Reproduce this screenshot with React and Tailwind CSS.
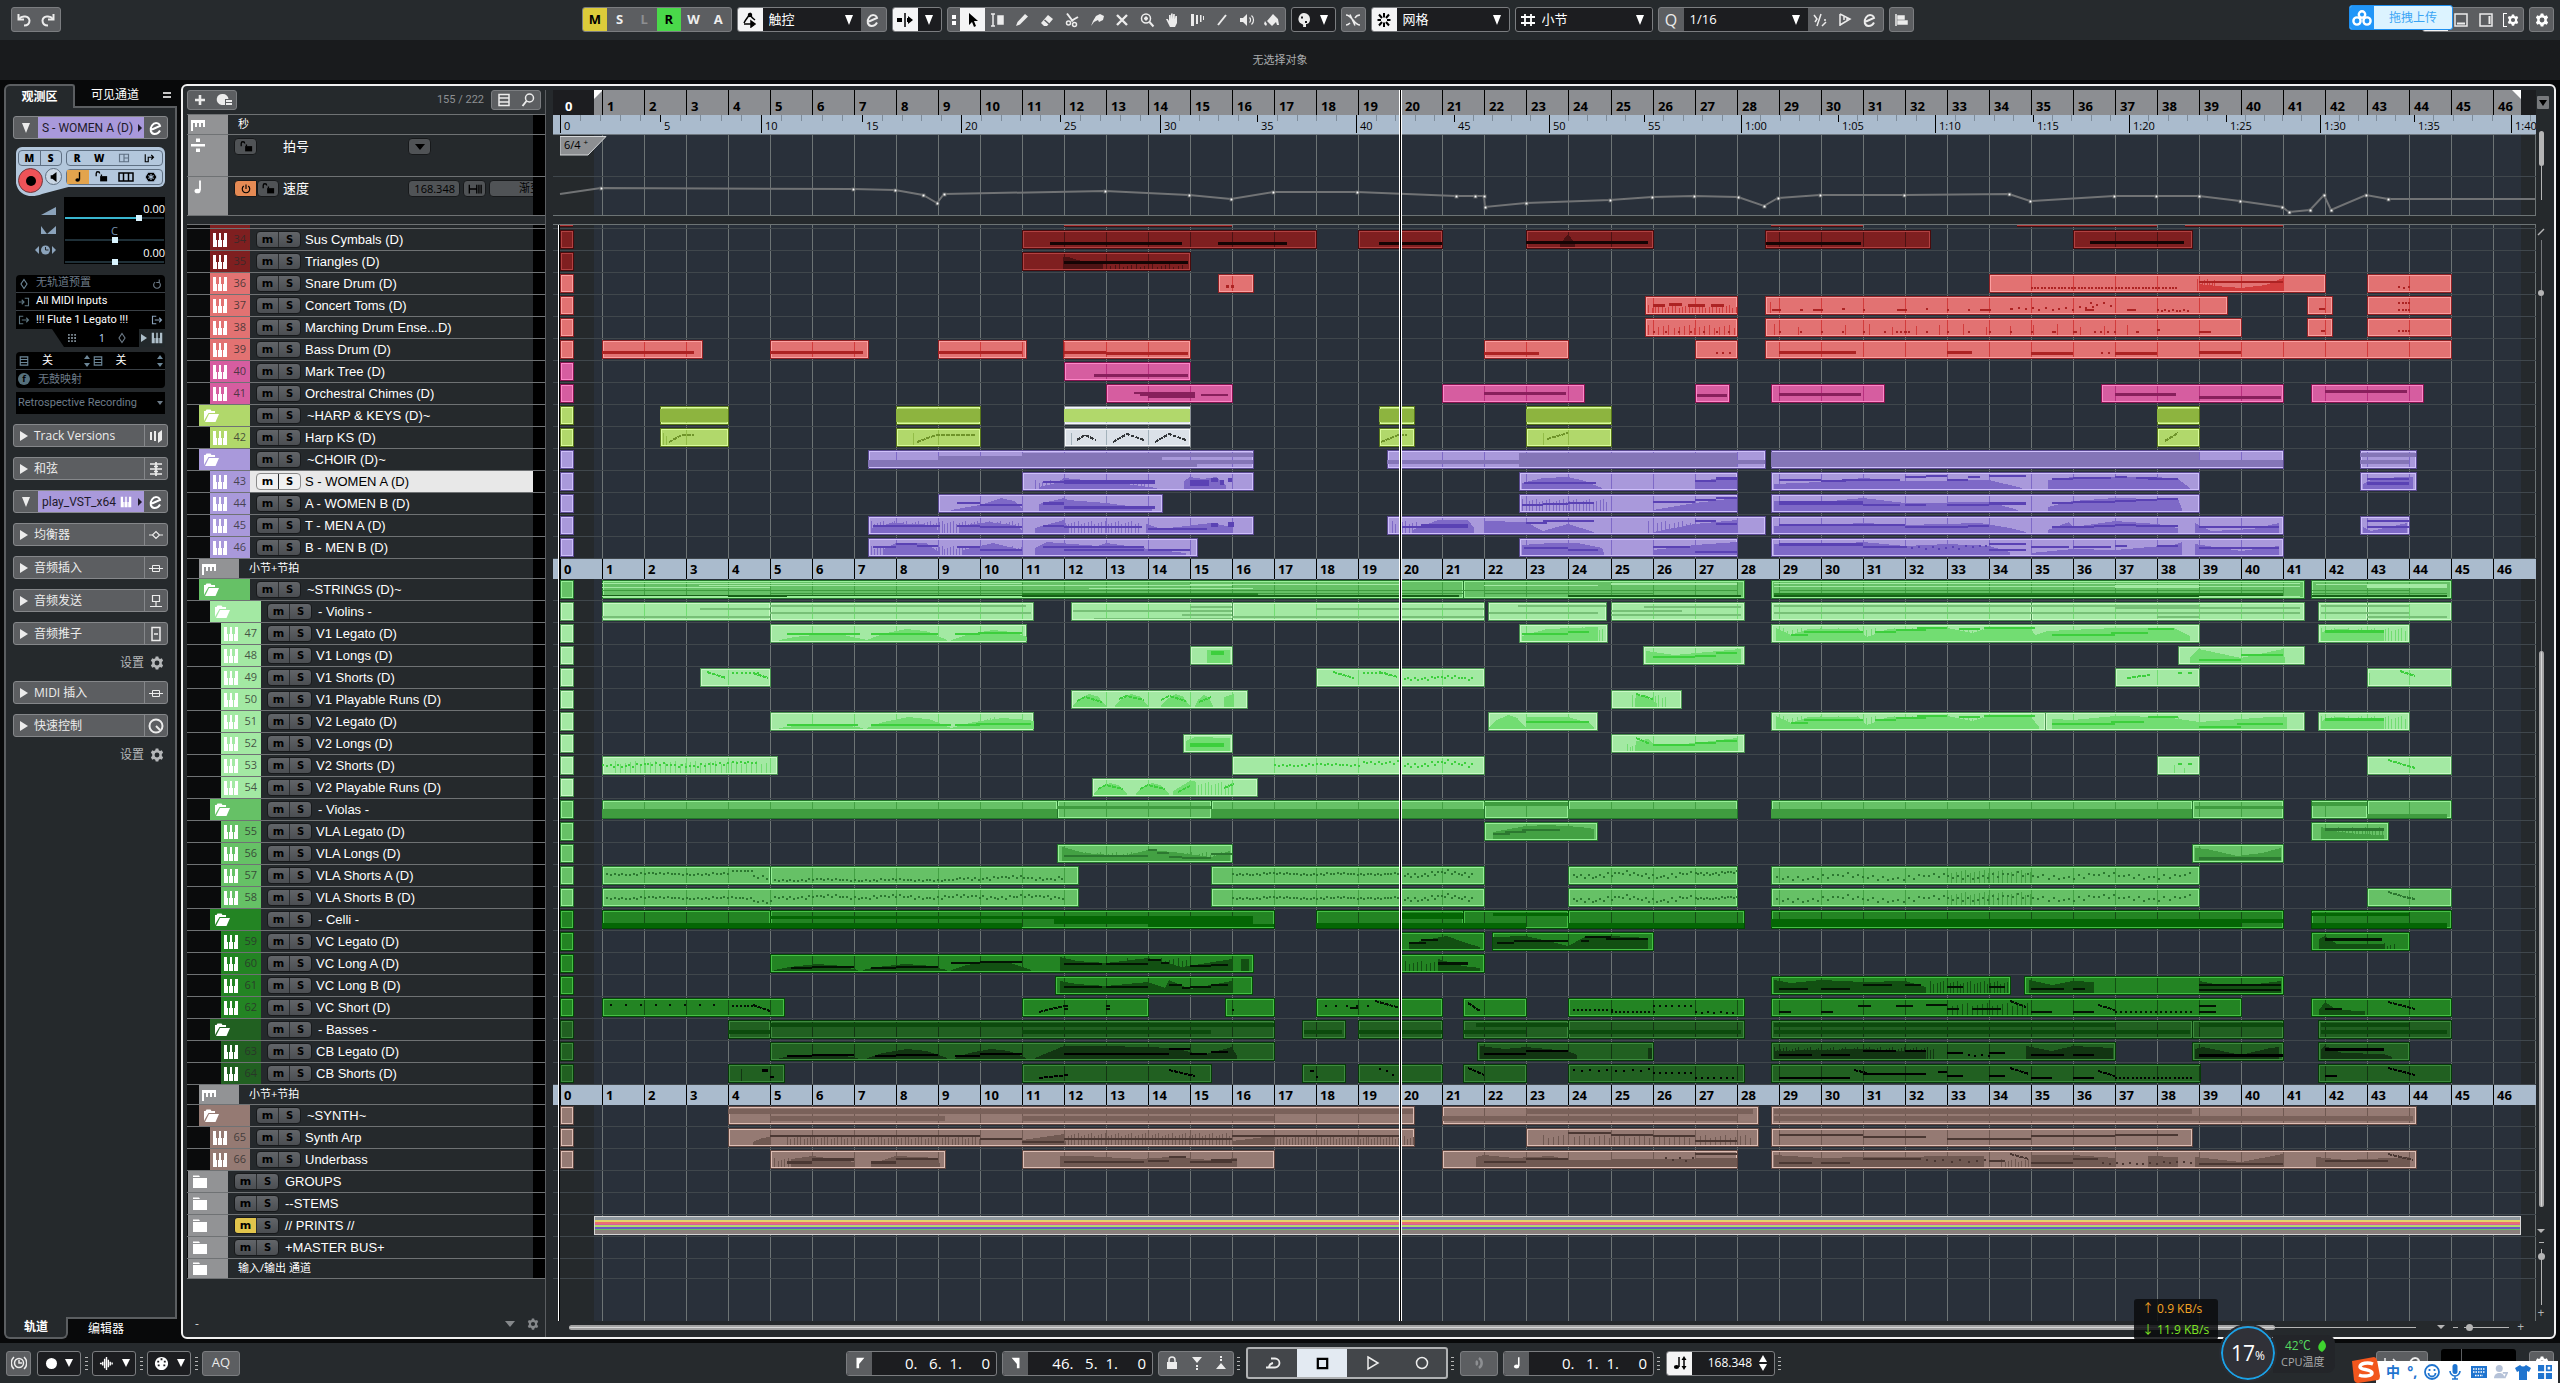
import { Fragment } from "react";

// Horizontal zoom of the project window, in pixels per bar
const BAR_WIDTH = 42.02;
const ORIGIN = 7;
const LEFT_LOCATOR = 0.81;
const RIGHT_LOCATOR = 46.67;
const BARS = Array.from({ length: 47 }, (_, i) => i);

const barX = (bar) => ORIGIN + Math.round(bar * BAR_WIDTH);

const SECONDS = [
  [0, "0"], [100, "5"], [201, "10"], [302, "15"], [401, "20"], [500, "25"],
  [600, "30"], [697, "35"], [796, "40"], [894, "45"], [989, "50"], [1084, "55"],
  [1181, "1:00"], [1278, "1:05"], [1375, "1:10"], [1473, "1:15"], [1569, "1:20"],
  [1666, "1:25"], [1760, "1:30"], [1854, "1:35"], [1951, "1:40"],
];

const TEMPO_POINTS = [
  [0, 17], [41, 11], [293, 12], [335, 13], [363, 18], [377, 26], [384, 17],
  [545, 14], [629, 18], [671, 22], [713, 15], [797, 15], [896, 19], [915, 19],
  [924, 19], [925, 30], [966, 26], [1050, 23], [1092, 20], [1134, 19],
  [1178, 20], [1204, 29], [1218, 21], [1260, 18], [1344, 18], [1449, 17],
  [1470, 24], [1554, 19], [1596, 19], [1639, 19], [1680, 24], [1722, 30],
  [1729, 35], [1750, 33], [1764, 18], [1771, 33], [1806, 18], [1828, 22],
];

const COLORS = {
  maroon: { block: "bg-[#7f1f20]", fill: "#7f1f20", light: "#b24141", dark: "#490a0c", note: "#150404", area: "#4c1213", band: "#5a1516" },
  red: { block: "bg-[#e27272]", fill: "#e27272", light: "#fba0a0", dark: "#8f2124", note: "#ad2323", area: "#d23c3c", band: "#c04a4a" },
  pink: { block: "bg-[#d65da0]", fill: "#d65da0", light: "#fd88c8", dark: "#86124f", note: "#88205c", area: "#b8307f", band: "#b0447f" },
  lime: { block: "bg-[#b1d86b]", fill: "#b1d86b", light: "#dafc9c", dark: "#57751a", note: "#6f942a", area: "#93bd48", band: "#8db43f" },
  white: { block: "bg-[#dbe1e8]", fill: "#dbe1e8", light: "#f5f7f9", dark: "#8b9197", note: "#33373a", area: "#a3b2bb", band: "#b1d86b" },
  violet: { block: "bg-[#a999db]", fill: "#a999db", light: "#cfc0fb", dark: "#5b4a92", note: "#5a42b4", area: "#7e69c7", band: "#8475b7" },
  mint: { block: "bg-[#a3e9a3]", fill: "#a3e9a3", light: "#caf9c6", dark: "#4a9450", note: "#3dcf3d", area: "#72dd72", band: "#77c077" },
  green: { block: "bg-[#66c166]", fill: "#66c166", light: "#98f098", dark: "#23752a", note: "#2c7830", area: "#43a143", band: "#3f9c3f" },
  forest: { block: "bg-[#238423]", fill: "#238423", light: "#46c046", dark: "#024b04", note: "#031403", area: "#125012", band: "#046604" },
  pine: { block: "bg-[#216021]", fill: "#216021", light: "#3e8c3e", dark: "#053a07", note: "#000000", area: "#123512", band: "#0c4a0d" },
  brown: { block: "bg-[#957a73]", fill: "#957a73", light: "#dfbfb5", dark: "#5e453f", note: "#4b3833", area: "#705952", band: "#7a615a" },
  grey: { block: "bg-[#929395]" },
};

const note = (a, b, y, h = 2) => ({ type: "note", a, b, y, h });
const band = (a, b, y, h) => ({ type: "band", a, b, y, h });
const area = (...points) => ({ type: "area", points });
const comb = (a, b, step, h) => ({ type: "comb", a, b, step, h });
const dots = (a, b, step, y, amp = 0) => ({ type: "dots", a, b, step, y, amp });
const line = (...points) => ({ type: "line", points });
const clip = (start, end, ...shapes) => ({ start, end, shapes });

const arch = (a, b, h) =>
  area([a, 1], [a + (b - a) * 0.2, h * 0.6], [a + (b - a) * 0.5, h], [a + (b - a) * 0.75, h * 0.8], [b, 1]);

const v1Long = [
  area([28.95, 13], [29.3, 6], [29.7, 12], [30.9, 12], [31.1, 4], [31.6, 12], [33, 13], [33.6, 8], [34, 13], [35, 12], [35.1, 6], [35.4, 10], [37, 13], [38.4, 13], [38.8, 5]),
  comb(29.1, 34.9, 0.11, 13),
  note(29.3, 29.7, 10), note(29.6, 31, 7), note(31.3, 31.8, 7), note(31.8, 32.5, 5), note(32.3, 33, 3),
  note(33.3, 33.8, 4), note(33.9, 35.1, 3), note(35.5, 37, 10), note(36.9, 37.8, 8), note(37.8, 38.4, 4),
];

const v2Long = [
  area([28.95, 13], [29.3, 6], [29.7, 12], [30.9, 12], [31.1, 4], [31.6, 12], [33, 13], [33.6, 8], [34, 13], [35, 12], [35.2, 2]),
  ...v1Long.slice(1, 9),
];

const TRACKS = [
  {
    name: "Sus Cymbals (D)", number: 34, level: 2, color: "maroon",
    clips: [
      clip(11, 18, note(11.65, 14.8, 12, 3), note(15.65, 17.3, 12, 3)),
      clip(19, 21, note(19.5, 21, 12, 3)),
      clip(23, 26, area([23.8, 3], [24, 13], [24.15, 4]), note(23, 25.9, 11, 3)),
      clip(28.67, 32.6, note(28.7, 30.95, 12, 3)),
      clip(36, 38.83, note(36.4, 38.65, 11, 3)),
    ],
  },
  {
    name: "Triangles (D)", number: 35, level: 2, color: "maroon",
    clips: [clip(11, 15, area([11.97, 12], [12.1, 12], [12.3, 9], [12.7, 6], [12.9, 5]), comb(12.9, 14.8, 0.1, 5), note(12, 14.95, 9, 3))],
  },
  {
    name: "Snare Drum (D)", number: 36, level: 2, color: "red",
    clips: [
      clip(15.67, 16.5, note(15.85, 15.93, 11, 3), note(15.98, 16.04, 11, 3)),
      clip(34, 42, dots(35, 38.5, 0.08, 13), area([39, 7], [39.4, 5], [40, 3], [40.6, 6], [41, 13]), comb(38.95, 39.4, 0.06, 12), note(39, 41, 7, 2)),
      clip(43, 45, dots(43.75, 44.05, 0.12, 12, 1)),
    ],
  },
  {
    name: "Concert Toms (D)", number: 37, level: 2, color: "red",
    clips: [
      clip(25.83, 28, comb(25.9, 28, 0.08, 8), note(26, 26.3, 8, 3), note(26.4, 26.7, 7, 3), note(26.85, 27.25, 8, 3), note(27.4, 27.7, 8, 3)),
      clip(28.67, 39.67, comb(28.8, 29, 0.3, 11), note(28.85, 29.05, 13), note(29.5, 29.57, 13), note(29.83, 30.05, 13), note(30.5, 30.58, 12), note(31, 31.05, 13), note(31.83, 32.05, 13), note(32.5, 32.56, 12), note(33, 33.05, 13), note(33.5, 33.56, 13), note(33.8, 34.05, 13), note(34.5, 34.57, 12), dots(34.7, 36.6, 0.16, 11, 2), dots(36.4, 37, 0.16, 6, 3), note(36.3, 36.5, 13), note(37.3, 37.5, 13), dots(38, 38.8, 0.09, 13, 1)),
      clip(41.58, 42.17, note(41.87, 42, 12)),
      clip(43, 45, dots(43.75, 44.05, 0.08, 6), dots(43.75, 44.05, 0.08, 13)),
    ],
  },
  {
    name: "Marching Drum Ense...D)", number: 38, level: 2, color: "red",
    clips: [
      clip(25.83, 28, comb(25.9, 28, 0.12, 10), dots(26, 27.9, 0.3, 13)),
      clip(28.67, 40, comb(28.9, 37.5, 0.56, 11), dots(29, 33, 0.5, 13), dots(31.8, 32.1, 0.09, 13), dots(33, 35, 0.5, 13), note(35.5, 35.6, 13), note(36, 36.1, 13), dots(36.5, 37, 0.16, 13), note(37.5, 37.57, 13), note(38, 38.07, 11), note(39, 39.3, 13)),
      clip(41.58, 42.17, note(41.9, 42, 12)),
      clip(43, 45, dots(43.75, 44.05, 0.08, 12)),
    ],
  },
  {
    name: "Bass Drum (D)", number: 39, level: 2, color: "red",
    clips: [
      clip(1, 3.37, note(1, 3.2, 11, 3)),
      clip(5, 7.33, note(5, 7.2, 11, 3)),
      clip(9, 11.08, note(9, 11, 11, 3)),
      clip(11.97, 15, note(12, 13, 11, 3), note(13, 14.95, 12, 3)),
      clip(22, 24, note(22, 23.3, 12, 3)),
      clip(27, 28, dots(27.5, 27.9, 0.16, 12)),
      clip(28.67, 45, note(29, 30.85, 11, 3), note(33, 33.6, 11, 3), note(35, 36, 12, 3), dots(36.67, 36.9, 0.17, 12), note(37, 38, 12, 3), note(39, 40, 11, 3)),
    ],
  },
  { name: "Mark Tree (D)", number: 40, level: 2, color: "pink", clips: [clip(12, 15, note(12.7, 14.95, 12, 3))] },
  {
    name: "Orchestral Chimes (D)", number: 41, level: 2, color: "pink",
    clips: [
      clip(13, 16, note(13.65, 15.1, 8), note(13.8, 15.1, 10), note(14, 15.1, 9, 5), note(15.25, 15.9, 10)),
      clip(21, 24.37, note(22, 23.95, 8, 3)),
      clip(27, 27.83, note(27.05, 27.77, 10, 3)),
      clip(28.83, 31.5, note(29, 30.95, 9, 3)),
      clip(36.67, 41, note(37, 38.45, 9, 3), note(39, 40.95, 12, 3)),
      clip(41.67, 44.33, note(42, 43.95, 6, 3)),
    ],
  },
  {
    name: "~HARP & KEYS (D)~", level: 1, folder: true, color: "lime",
    clips: [
      clip(2.38, 4, band(2.38, 4, 3, 13)),
      clip(8, 10, band(8, 10, 3, 13)),
      { ...clip(12, 15, band(12, 15, 3, 13)), color: "white" },
      clip(19.5, 20.33, band(19.5, 20.33, 3, 13)),
      clip(23, 25, band(23, 25, 3, 13)),
      clip(38, 39, band(38, 39, 3, 13)),
    ],
  },
  {
    name: "Harp KS (D)", number: 42, level: 2, color: "lime",
    clips: [
      clip(2.38, 4, comb(2.45, 2.6, 0.08, 12), line([2.6, 14], [2.9, 7], [3.2, 7])),
      clip(8, 10, comb(8.4, 8.5, 0.2, 12), line([8.5, 14], [8.95, 7], [9.9, 7])),
      { ...clip(12, 15, comb(12.15, 12.2, 0.2, 12), line([12.3, 12], [12.5, 7], [12.75, 12]), line([13.15, 14], [13.5, 6], [13.9, 12]), line([14.15, 14], [14.5, 6], [14.9, 12])), color: "white" },
      clip(19.5, 20.33, line([19.55, 14], [19.95, 7], [20.15, 7])),
      clip(23, 25, comb(23.4, 23.5, 0.2, 12), line([23.5, 11], [24, 5])),
      clip(38, 39, line([38.2, 13], [38.5, 5])),
    ],
  },
  {
    name: "~CHOIR (D)~", level: 1, folder: true, color: "violet",
    clips: [
      clip(7.33, 16.5, band(7.33, 9, 10, 7), band(9, 11, 6, 11), band(11, 14.33, 3, 14), band(14.33, 16.5, 3, 4), band(14.33, 15.17, 10, 7), band(15.17, 16.5, 10, 4)),
      clip(19.67, 28.67, band(19.67, 22.83, 10, 4), band(22.83, 28, 3, 14), band(28, 28.67, 10, 4)),
      clip(28.83, 41, band(28.83, 39, 2, 15), band(39, 41, 10, 7)),
      clip(42.83, 44.17, band(42.83, 44.17, 3, 4), band(42.83, 44, 10, 4)),
    ],
  },
  {
    name: "S - WOMEN A (D)", number: 43, level: 2, color: "violet", selected: true,
    clips: [
      clip(11, 16.5, area([11.4, 2], [11.8, 6], [12, 11], [12.5, 9], [13, 8], [13.8, 3], [14.2, 1]), comb(11.3, 14, 0.09, 9), note(11.5, 12, 9), note(12, 14.15, 8, 4), area([14.85, 8], [15, 12], [15.3, 10], [15.6, 12], [15.85, 4]), note(15, 15.45, 8, 6), note(15.5, 15.65, 6, 4), note(15.7, 15.8, 8, 5), note(15.9, 16, 6, 4)),
      clip(22.83, 28, area([22.9, 6], [23.4, 11], [24, 12], [24.4, 8], [24.8, 1]), note(22.95, 24.65, 10, 2), area([27, 8], [27.5, 10], [28, 12]), note(27, 27.5, 8), note(27.5, 28, 5, 3)),
      clip(28.83, 39, area([28.9, 5], [30, 7], [31, 11], [32, 8], [34, 9], [34.8, 1]), area([35.4, 9], [36, 12], [37, 12], [38, 12], [38.5, 10], [38.8, 1]), note(29, 30, 7), note(30, 30.6, 8), note(30.5, 31.9, 7), note(32, 32.5, 4), note(32.5, 33, 3), note(33, 33.5, 7), note(33.5, 33.8, 4), note(34, 34.9, 3), note(35.5, 36, 6), note(36, 36.9, 5), note(37, 37.3, 4), note(37.5, 38, 5), note(37.8, 38.5, 6)),
      clip(42.83, 44.17, area([42.9, 5], [43.2, 11], [44.1, 12]), note(43, 44, 6, 2), note(43, 44, 10, 3)),
    ],
  },
  {
    name: "A - WOMEN B (D)", number: 44, level: 2, color: "violet",
    clips: [
      clip(9, 14.33, area([9.3, 1], [10, 6], [10.5, 13], [10.8, 10], [11, 2]), area([11.4, 7], [12, 13], [12.1, 11], [13, 8], [14.1, 2]), note(9.45, 10, 8), note(10, 11, 10), note(11.5, 12, 8, 3), note(12, 14.15, 12, 3)),
      clip(22.83, 28, comb(22.9, 24.9, 0.08, 12), note(22.9, 23.4, 10), note(23.4, 24, 9), note(24, 24.6, 8), area([26, 1], [27, 8], [28, 13]), note(26, 27, 7), note(27, 27.5, 5), note(27.5, 28, 3)),
      clip(28.83, 39, area([28.9, 10], [30, 9], [31, 13], [32, 8], [34, 9], [34.7, 1]), area([35.4, 4], [36, 10], [37, 13], [38, 12], [38.5, 12], [38.6, 2]), note(29, 31, 7, 4), note(31, 31.9, 10, 2), note(32, 32.5, 10), note(33, 34, 10), note(34, 34.9, 8, 3), note(35.5, 36, 8), note(36, 37, 7), note(37, 37.5, 6), note(37.5, 38, 5), note(38, 38.5, 4)),
    ],
  },
  {
    name: "T - MEN A (D)", number: 45, level: 2, color: "violet",
    clips: [
      clip(7.33, 16.5, area([7.4, 5], [7.9, 10], [8.9, 8], [9, 2]), comb(7.4, 10.9, 0.07, 12), area([9.5, 7], [10.2, 11], [10.8, 8], [11, 3]), area([11.3, 5], [12, 13], [12.1, 5]), comb(12, 13.8, 0.08, 12), area([13.95, 9], [14.3, 4], [15.5, 10], [16, 6]), note(7.45, 9.05, 9), note(9.45, 10, 9), note(10, 11, 10), note(11.5, 12, 9), note(12, 13.85, 10), note(14, 15.4, 12), note(15.5, 15.65, 7, 4), note(15.9, 16.05, 6, 5)),
      clip(19.67, 28.67, comb(19.8, 20.4, 0.08, 12), area([20.3, 3], [20.9, 13], [21.6, 13], [21.75, 5]), area([22, 12], [23, 11], [23.4, 2], [24, 9], [24.6, 1]), area([26, 1], [27, 9], [28, 13]), comb(25.9, 27, 0.1, 12), note(20, 20.5, 10), note(20.5, 21.6, 8, 4), note(23, 23.5, 6), note(23.4, 24.6, 4), note(27, 27.5, 4), note(27.5, 28, 7)),
      clip(28.83, 41, area([28.9, 7], [30, 8], [31, 10], [32, 8], [33.8, 10], [34.5, 5], [34.9, 1]), area([35.4, 3], [35.9, 11], [36, 6], [37, 12], [38, 9], [38.5, 5]), area([38.9, 10], [39.3, 2], [40.3, 4], [40.9, 10]), note(29, 31, 8), note(31, 32, 8), note(32, 33.5, 10), note(33.5, 34, 9), note(35.5, 36.5, 10), note(36.5, 37, 9), note(37, 37.5, 8), note(37.5, 38.5, 9), note(39, 40.9, 10)),
      clip(42.83, 44, area([42.9, 6], [43.1, 2], [43.95, 10]), note(43, 44, 4), note(43, 44, 10)),
    ],
  },
  {
    name: "B - MEN B (D)", number: 46, level: 2, color: "violet",
    clips: [
      clip(7.33, 15.17, area([7.7, 6], [8, 12], [8.7, 12], [9.05, 2]), comb(7.4, 11, 0.07, 9), area([9.6, 5], [10.3, 12], [11, 5]), area([11.3, 7], [11.6, 13], [12.8, 9], [13, 12], [14, 6], [14.9, 2]), note(7.45, 8, 8), note(8, 8.5, 5), note(8.5, 9, 7), note(9.45, 10, 8), note(10, 11, 11), note(11.5, 13.9, 8), note(12, 13.9, 11), note(14, 15, 11)),
      clip(22.83, 28, area([22.9, 10], [23.6, 12], [24.2, 12], [24.8, 7], [24.85, 2]), area([26, 5], [27, 10], [28, 13]), note(22.95, 24, 9), note(24, 24.7, 11), note(26, 26.9, 8), note(27, 28, 13)),
      clip(28.83, 41, area([28.9, 11], [30, 10], [31, 13], [32, 9], [33, 11], [34, 9], [34.5, 3]), area([35, 2], [36, 6], [37, 5], [38.4, 10], [38.6, 13]), area([38.9, 11], [40, 4], [40.9, 9]), note(29, 31, 5, 3), note(31, 32, 8), dots(32, 34, 0.16, 8, 2), note(34, 34.9, 5), note(34, 34.9, 11), note(35, 35.9, 8), note(36, 36.9, 8), note(37, 37.3, 7), note(38, 38.5, 7), note(39, 40.9, 9)),
    ],
  },
  { name: "小节+节拍", kind: "ruler", level: 1, color: "grey" },
  {
    name: "~STRINGS (D)~", level: 1, folder: true, color: "green",
    clips: [
      clip(1, 21.5, { ...note(1, 11, 3, 1), tone: "#a3e9a3" }, { ...note(3.3, 16, 5, 1), tone: "#a3e9a3" }, { ...note(1, 5, 7, 1), tone: "#a3e9a3" }, { ...note(12.6, 16.5, 8, 1), tone: "#a3e9a3" }, { ...note(15, 20, 4, 1), tone: "#a3e9a3" }, band(1, 21.5, 10, 1), band(5, 21.5, 13, 1), { ...note(11, 16.6, 13, 3), tone: "#238423" }, { ...note(1, 21.4, 15, 2), tone: "#176017" }, { ...note(1, 4, 16, 1), tone: "#a3e9a3" }, { ...note(5.4, 11, 16, 1), tone: "#98f098" }),
      clip(21.5, 28.17, { ...note(22, 24.7, 5, 1), tone: "#a3e9a3" }, { ...note(25, 28, 3, 2), tone: "#a3e9a3" }, band(21.5, 28, 10, 1), band(22, 26, 13, 1), { ...note(24, 28.1, 15, 2), tone: "#176017" }),
      clip(28.83, 41.5, { ...note(28.9, 41.4, 3, 1), tone: "#a3e9a3" }, { ...note(28.9, 41.4, 6, 1), tone: "#a3e9a3" }, { ...note(37, 39, 5, 3), tone: "#a3e9a3" }, band(29, 41, 10, 1), { ...note(28.9, 41, 13, 3), tone: "#238423" }, { ...note(28.9, 41, 15, 2), tone: "#176017" }, { ...note(39, 41.4, 16, 1), tone: "#a3e9a3" }),
      clip(41.67, 45, { ...note(41.8, 44.9, 4, 1), tone: "#a3e9a3" }, { ...note(43, 44.9, 5, 3), tone: "#a3e9a3" }, band(41.7, 44, 10, 1), band(41.7, 44.9, 13, 1), { ...note(41.7, 44.9, 15, 2), tone: "#176017" }),
    ],
  },
  {
    name: "- Violins -", level: 2, folder: true, color: "mint",
    clips: [
      clip(1, 5, band(3.33, 5, 6, 2), band(1, 5, 14, 2)),
      clip(5, 11.25, band(5, 11.1, 3, 2), band(5, 11.2, 10, 2)),
      clip(12.17, 16, band(15, 16, 4, 2), band(12.2, 16, 8, 2), band(14.8, 16, 12, 2), band(12.7, 16, 16, 1)),
      clip(16, 22, band(18, 22, 6, 2), band(16, 22, 14, 2)),
      clip(22.08, 24.9, band(22.8, 24.9, 3, 2), band(22.1, 24.7, 10, 2)),
      clip(25, 28.17, band(25.8, 28.1, 4, 2), band(25, 26.7, 8, 2), band(25, 28.1, 12, 2)),
      clip(28.83, 35, band(28.9, 35, 3, 2), band(28.9, 35, 10, 2)),
      clip(35, 41.5, band(35, 39, 3, 2), band(37, 41.4, 5, 2), band(35, 41.4, 10, 2), band(38, 39, 14, 2)),
      clip(41.83, 43, band(41.9, 43, 3, 2), band(41.9, 43, 10, 2)),
      clip(43, 45, band(43, 44, 3, 2), band(43, 44, 10, 2), band(43, 44.9, 14, 2)),
    ],
  },
  {
    name: "V1 Legato (D)", number: 47, level: 3, color: "mint",
    clips: [
      clip(5, 11.08, arch(5.2, 7.3, 7), arch(7.3, 9.2, 12), arch(9.3, 11.3, 11), note(5.4, 7.15, 9), note(7.4, 9, 9), note(9.4, 10, 9), note(9.95, 11, 8)),
      clip(22.83, 24.92, area([22.9, 5], [23.5, 12], [24.7, 14]), comb(24, 24.8, 0.08, 14), note(22.9, 24, 9), note(24, 24.5, 7)),
      clip(28.83, 39, ...v1Long),
      clip(41.83, 44, comb(41.9, 43.95, 0.08, 13), area([41.9, 9], [42.3, 12], [43.4, 10]), note(42, 43.4, 6, 3)),
    ],
  },
  {
    name: "V1 Longs (D)", number: 48, level: 3, color: "mint",
    clips: [
      clip(15, 16, area([15.4, 13], [15.95, 13]), note(15.5, 15.8, 5, 4)),
      clip(25.77, 28.17, area([25.85, 12], [26.5, 8], [28.1, 14]), note(26, 27, 10), note(27, 27.5, 9), note(27.5, 28, 6)),
      clip(38.5, 41.5, area([38.8, 6], [39, 14], [40, 5], [41, 14], [41.05, 3]), note(39, 40, 13), note(40, 41, 8)),
    ],
  },
  {
    name: "V1 Shorts (D)", number: 49, level: 3, color: "mint",
    clips: [
      clip(3.33, 5, line([3.5, 4], [3.95, 10]), dots(4.1, 4.7, 0.1, 4), line([4.6, 5], [4.95, 10])),
      clip(18, 22, line([18.4, 4], [18.9, 10]), dots(19.1, 19.6, 0.1, 4), line([19.5, 4], [19.95, 9]), dots(20, 21.7, 0.08, 9, 2)),
      clip(37, 39, line([37.3, 10], [37.85, 7]), note(38.5, 38.6, 4), note(38.75, 38.85, 4)),
      clip(43, 45, comb(43.05, 43.2, 0.2, 12), line([43.8, 3], [44.15, 8])),
    ],
  },
  {
    name: "V1 Playable Runs (D)", number: 50, level: 3, color: "mint",
    clips: [
      clip(12.17, 16.35, arch(12.2, 13, 13), arch(13.2, 14, 13), arch(14.3, 15, 13), arch(15.1, 15.55, 12), area([15.8, 10], [16.05, 13]), line([12.3, 11], [12.5, 7], [12.9, 12]), line([13.3, 9], [13.5, 6], [13.9, 10]), line([14.3, 10], [14.5, 6], [14.9, 11]), line([15.2, 12], [15.5, 7])),
      clip(25, 26.67, comb(25.5, 26.3, 0.08, 12), area([25.6, 12], [25.9, 9], [26.1, 4]), line([25.6, 4], [26, 9])),
    ],
  },
  {
    name: "V2 Legato (D)", number: 51, level: 3, color: "mint",
    clips: [
      clip(5, 11.25, arch(5.2, 7.2, 5), arch(7.3, 9.3, 12), arch(9.3, 11.8, 11), comb(10, 10.4, 0.08, 12), note(5.4, 7.1, 12), note(7.4, 9.3, 12), note(9.4, 10, 12), note(9.9, 11.2, 11)),
      clip(22.08, 24.67, arch(22.1, 23, 14), area([23, 12], [24, 12], [24.5, 6], [24.6, 1]), note(23, 24, 9), note(24, 24.5, 9)),
      clip(28.83, 35.33, ...v2Long),
      clip(35.33, 41.5, area([35.5, 10], [36, 9], [37, 13], [38.2, 12], [39, 7], [40.7, 12], [41.1, 12]), comb(37.4, 38.5, 0.1, 13), note(35.5, 37, 11), note(36.9, 37.7, 9), note(37.8, 38.5, 4), note(39, 40, 14), note(39.9, 41, 11)),
      clip(41.83, 44, comb(41.9, 43.95, 0.08, 13), area([41.9, 8], [42.3, 12], [43.4, 9]), note(42, 43.4, 6, 3)),
    ],
  },
  {
    name: "V2 Longs (D)", number: 52, level: 3, color: "mint",
    clips: [
      clip(14.83, 16, area([14.9, 10], [15.1, 14], [15.95, 13]), note(15, 15.8, 9, 4)),
      clip(25, 28.17, comb(25.4, 25.6, 0.06, 7), area([25.6, 10], [25.9, 12], [26.1, 5], [27, 8], [28, 13]), line([25.6, 4], [25.95, 10]), note(26, 27, 10), note(27, 27.5, 8), note(27.5, 28, 6)),
    ],
  },
  {
    name: "V2 Shorts (D)", number: 53, level: 3, color: "mint",
    clips: [
      clip(1, 5.17, comb(1.3, 5, 0.12, 12), dots(1, 4, 0.09, 8, 2), dots(4.1, 4.7, 0.09, 5, 1)),
      clip(16, 22, dots(17, 19, 0.09, 8, 1), dots(19.1, 20, 0.09, 5, 2), dots(20, 21.7, 0.08, 7, 3)),
      clip(38, 39, comb(38.4, 38.8, 0.25, 8), note(38.5, 38.6, 7), note(38.75, 38.85, 7)),
      clip(43, 45, line([43.5, 4], [43.9, 9], [44.15, 12])),
    ],
  },
  {
    name: "V2 Playable Runs (D)", number: 54, level: 3, color: "mint",
    clips: [clip(12.67, 16.58, arch(12.7, 13.5, 12), arch(13.7, 14.5, 12), area([14.6, 4], [15, 14], [15.1, 14]), comb(15.1, 16, 0.08, 13), line([12.8, 11], [13, 7], [13.4, 11]), line([13.8, 11], [14, 7], [14.4, 11]), line([14.7, 14], [15, 8]), line([15.8, 10], [16.05, 6]))],
  },
  {
    name: "- Violas -", level: 2, folder: true, color: "green",
    clips: [
      clip(1, 11.83, band(1, 11.83, 9, 9)),
      clip(11.83, 15.5, band(11.83, 15.5, 6, 3)),
      clip(15.5, 22, band(15.5, 22, 9, 9)),
      clip(22, 24, band(22, 24, 2, 4)),
      clip(24, 28, band(24, 28, 9, 9)),
      clip(28.83, 38.83, band(28.83, 38.83, 9, 9)),
      clip(38.83, 41, band(38.9, 41, 6, 3)),
      clip(41.67, 43, band(41.7, 43, 2, 4)),
      clip(43, 45, band(43, 44.9, 14, 4)),
    ],
  },
  {
    name: "VLA Legato (D)", number: 55, level: 3, color: "green",
    clips: [
      clip(22, 24.67, area([22.2, 7], [23, 13], [23.5, 14], [24.3, 12], [24.6, 10]), note(22.2, 22.6, 11), note(22.5, 23, 9), note(22.9, 23.8, 7)),
      clip(41.67, 43.5, area([41.9, 12], [42.2, 8], [42.8, 5], [43.4, 4]), comb(42, 43.4, 0.08, 12), note(42, 43.4, 6, 3)),
    ],
  },
  {
    name: "VLA Longs (D)", number: 56, level: 3, color: "green",
    clips: [
      clip(11.83, 16, area([11.95, 14], [12.5, 8], [13.4, 5], [14, 11], [14.6, 9], [15.1, 6], [15.5, 4], [15.95, 10]), comb(12.5, 15.9, 0.09, 9), note(12, 14, 11), note(14, 14.2, 5), note(14.2, 14.5, 8), note(14.5, 14.8, 12), note(14.8, 15.5, 13), note(15.5, 16, 9)),
      clip(38.83, 41, area([38.9, 13], [39.2, 12], [39.9, 5], [40.5, 8], [40.95, 13]), note(39, 40.95, 13, 3)),
    ],
  },
  {
    name: "VLA Shorts A (D)", number: 57, level: 3, color: "green",
    clips: [
      clip(1, 5, dots(1.1, 4, 0.09, 7, 1), dots(4.1, 4.6, 0.09, 4), dots(4.6, 5, 0.1, 9, 3)),
      clip(5, 12.33, dots(5.1, 9.5, 0.09, 13, 1), dots(9.5, 12, 0.09, 11, 2)),
      clip(15.5, 22, dots(16, 20, 0.08, 7, 1), dots(20, 21.7, 0.08, 7, 3)),
      clip(24, 28, dots(24.1, 26.9, 0.09, 8, 3), dots(27, 28, 0.07, 6, 2)),
      clip(28.83, 39, dots(28.95, 33, 0.12, 10, 3), comb(33, 35, 0.11, 13), dots(33, 38.8, 0.12, 9, 3)),
    ],
  },
  {
    name: "VLA Shorts B (D)", number: 58, level: 3, color: "green",
    clips: [
      clip(1, 12.33, dots(1.1, 4.6, 0.09, 9, 1), dots(4.6, 5, 0.1, 12, 2), dots(5.1, 12, 0.09, 8, 2)),
      clip(15.5, 22, dots(16, 20, 0.08, 9, 1), dots(20, 21.7, 0.08, 9, 3)),
      clip(24, 28, dots(24.1, 26.9, 0.09, 10, 3), dots(27, 28, 0.07, 9, 1)),
      clip(28.83, 39, dots(28.95, 33, 0.12, 10, 3), comb(33, 35, 0.11, 13), dots(33, 38.8, 0.12, 9, 3)),
      clip(43, 45, line([43.5, 4], [43.9, 9], [44.15, 11])),
    ],
  },
  {
    name: "- Celli -", level: 2, folder: true, color: "forest",
    clips: [
      clip(1, 5, band(1, 5, 13, 5)),
      clip(5, 17, band(5, 16.5, 6, 3), band(11.75, 16.5, 9, 5), band(5, 11, 13, 5), band(14, 17, 14, 3)),
      clip(18, 21.5, band(18, 21.5, 13, 5), band(20, 21.5, 3, 6)),
      clip(21.5, 24, band(22.2, 24, 3, 3), band(21.5, 23, 13, 5)),
      clip(24, 28.17, band(24, 28.17, 13, 5)),
      clip(28.83, 41, band(28.83, 40, 9, 8), band(40, 41, 9, 4)),
      clip(41.67, 45, band(41.7, 44, 3, 3), band(41.7, 44.9, 13, 5)),
    ],
  },
  {
    name: "VC Legato (D)", number: 59, level: 3, color: "forest",
    clips: [
      clip(20, 22, area([20.2, 5], [20.7, 10], [21.1, 13], [21.5, 7], [21.9, 2]), note(20.2, 20.6, 10), note(20.5, 20.9, 7)),
      clip(22.17, 26, area([22.2, 12], [23, 13], [23.6, 7], [24, 3], [24.4, 12], [25, 13], [25.9, 11]), note(22.3, 22.7, 10), note(22.7, 23, 8), note(23, 24, 8), note(24.3, 24.5, 8), note(24.4, 25, 4), note(24.9, 25.9, 6)),
      clip(41.67, 44, area([41.85, 10], [42, 13], [42.3, 5], [43.4, 5]), comb(43.4, 43.7, 0.08, 6), note(42, 43.35, 6, 3)),
    ],
  },
  {
    name: "VC Long A (D)", number: 60, level: 3, color: "forest",
    clips: [
      clip(5, 16.5, arch(5.1, 7.1, 7), arch(7.2, 9.2, 7), arch(9.3, 11.2, 10), area([11.9, 14], [12.3, 10], [13, 8], [14, 13], [14.8, 4], [16, 12]), comb(13.5, 14.9, 0.1, 13), area([16.2, 12], [16.4, 12]), note(5.5, 6, 13), note(6, 7, 12), note(7.4, 8, 13), note(8, 9, 12), note(9.3, 10, 8), note(10, 11, 7), note(12, 12.9, 9), note(13, 14, 9), note(14, 14.3, 5), note(14.3, 14.5, 8), note(15, 15.5, 11), note(15.5, 15.9, 10)),
      clip(20, 22, comb(20.1, 21.2, 0.1, 10), area([20.9, 12], [21.5, 5], [21.9, 3]), note(20.9, 21.6, 8, 3)),
    ],
  },
  {
    name: "VC Long B (D)", number: 61, level: 3, color: "forest",
    clips: [
      clip(11.77, 16.47, area([11.9, 12], [12.3, 9], [13, 7], [14, 11], [14.4, 5], [14.5, 13], [15, 4], [16, 12]), note(12, 12.9, 10), note(13, 14, 10), note(14.5, 14.8, 8), note(14.8, 15, 11), note(15, 15.5, 10), note(15.5, 15.9, 8)),
      clip(28.83, 34.5, area([28.9, 13], [29.3, 10], [30, 13], [31, 11], [32, 12], [32.5, 6]), comb(32.6, 34.5, 0.08, 12), note(29, 29.7, 12), note(30, 30.7, 12), note(31, 31.7, 8), note(32, 32.4, 8), note(33, 33.4, 10), note(34, 34.4, 10)),
      clip(34.83, 41, area([34.95, 13], [35.5, 8], [36, 12], [36.5, 11]), area([39, 12], [39.6, 7], [40.2, 8], [40.95, 12]), note(35, 35.8, 12), note(36, 36.3, 12), note(39, 40.95, 8), note(39, 40.95, 13)),
    ],
  },
  {
    name: "VC Short (D)", number: 62, level: 3, color: "forest",
    clips: [
      clip(1, 5.33, dots(1.2, 3.8, 0.35, 6), dots(4.1, 4.6, 0.09, 7), line([4.6, 7], [5, 13])),
      clip(11, 14, line([11.4, 14], [12, 8]), note(12, 12.1, 7), note(12, 12.1, 10), note(13, 13.1, 7), note(13, 13.1, 10)),
      clip(15.83, 17, note(16, 16.05, 11)),
      clip(18, 21, dots(18.2, 19.2, 0.25, 7), note(18.8, 19, 9), line([19.4, 3], [20, 10])),
      clip(21.5, 23, line([21.6, 5], [21.9, 13])),
      clip(24, 28.17, dots(24.1, 25, 0.1, 11), dots(25, 26, 0.1, 13), dots(26, 26.9, 0.15, 7), dots(27, 28, 0.15, 13, 1)),
      clip(28.83, 40, note(29, 29.3, 13), note(30, 30.3, 13), note(30.9, 31.2, 7), note(31.8, 32.2, 7), note(32.5, 33, 6), comb(33, 35, 0.12, 12), note(33, 33.3, 10), note(33.6, 34.3, 10), line([34.5, 3], [34.9, 9]), note(35, 35.5, 13), note(36, 36.5, 13), line([36.6, 7], [37, 12]), dots(37, 38.8, 0.12, 13), note(39, 39.4, 7), note(39, 39.4, 13)),
      clip(41.67, 45, area([41.85, 5], [42, 13], [42.3, 5], [42.95, 4]), note(42, 42.4, 10), line([43.5, 4], [44.15, 11])),
    ],
  },
  {
    name: "- Basses -", level: 2, folder: true, color: "pine",
    clips: [
      clip(4, 5, band(4, 5, 10, 4)),
      clip(5, 17, band(5, 17, 3, 4), band(11, 15.5, 10, 4)),
      clip(17.67, 18.67, band(17.7, 18.6, 10, 4)),
      clip(19, 21, band(19, 21, 10, 4)),
      clip(21.5, 24, band(21.8, 24, 3, 4), band(21.5, 23, 10, 4)),
      clip(24, 28.17, band(24, 28.1, 10, 4)),
      clip(28.83, 38.83, band(28.9, 37, 3, 4), band(28.9, 38.8, 10, 4)),
      clip(38.83, 41, band(39, 41, 3, 4)),
      clip(41.83, 45, band(41.9, 44, 3, 4), band(41.9, 44.9, 10, 4)),
    ],
  },
  {
    name: "CB Legato (D)", number: 63, level: 3, color: "pine",
    clips: [
      clip(5, 17, arch(5.2, 7.1, 5), arch(7.3, 9.2, 10), arch(9.4, 11.1, 10), area([11.3, 1], [12, 13], [13, 13], [13.9, 12], [14.6, 11], [15.3, 4], [16, 12], [16.1, 3]), note(5.4, 6, 13), note(6, 7, 12), note(7.5, 8, 13), note(8, 9, 12), note(9.4, 10, 13), note(10, 11, 11), note(12, 13, 11), note(13, 14, 11), note(14, 14.5, 11), note(14.5, 15, 6), note(15, 15.4, 11), note(15.5, 15.9, 9)),
      clip(21.83, 26, area([21.9, 13], [22.5, 10], [23, 12], [24, 8], [24.2, 4]), note(22, 23, 11), note(23, 24, 8), area([25.9, 11], [25.98, 11])),
      clip(28.83, 37, comb(28.9, 32.7, 0.07, 12), area([28.9, 8], [31, 10], [32.5, 7]), area([34.9, 13], [35.5, 8], [36, 13], [36.95, 11]), note(29, 29.8, 12), note(30, 30.7, 12), note(31, 31.8, 8), note(32, 32.5, 8), note(33, 33.4, 10), dots(33.5, 34, 0.16, 12, 1), note(34, 34.4, 10), note(35, 35.8, 12), note(36, 36.5, 12)),
      clip(38.83, 41, area([38.9, 10], [39.1, 12], [40, 4], [40.7, 11], [40.9, 12]), note(39, 41, 12, 3)),
      clip(41.83, 44, area([41.9, 10], [42, 13], [42.4, 6], [43.4, 5], [43.6, 2]), note(42, 43.4, 6, 3)),
    ],
  },
  {
    name: "CB Shorts (D)", number: 64, level: 3, color: "pine",
    clips: [
      clip(4, 5.33, comb(4.3, 4.4, 0.2, 12), note(4.8, 4.95, 5, 3), note(5, 5.1, 12)),
      clip(11, 15.5, line([11.4, 14], [12.1, 11]), line([14.5, 6], [15.1, 12])),
      clip(17.67, 18.67, note(17.85, 17.95, 6), note(18, 18.05, 12)),
      clip(19, 21, note(19.5, 19.55, 4), note(19.65, 19.7, 6), note(19.8, 19.85, 10)),
      clip(21.5, 23, line([21.6, 4], [22, 11])),
      clip(24, 28.17, dots(24.1, 26, 0.2, 5, 1), dots(26, 26.9, 0.15, 8), dots(27, 28, 0.15, 13)),
      clip(28.83, 39.03, note(29, 30.7, 13), line([30.8, 6], [31.1, 9]), note(31, 32.5, 9), note(32.8, 33, 7), note(33, 33.4, 11), note(34, 34.4, 11), line([34.5, 4], [34.95, 10]), note(35, 35.5, 13), note(36, 36.5, 13), line([36.6, 7], [37, 12]), dots(37, 38.8, 0.1, 13)),
      clip(41.83, 45, note(42, 42.3, 11), line([43.5, 4], [44.15, 11])),
    ],
  },
  { name: "小节+节拍", kind: "ruler", level: 1, color: "grey" },
  {
    name: "~SYNTH~", level: 1, folder: true, color: "brown",
    clips: [
      clip(4, 20.33, band(4, 20.3, 3, 5), band(5, 9.17, 10, 5), band(11, 17, 10, 5)),
      clip(21, 28.5, band(23, 28.4, 3, 5), band(21, 28, 10, 5)),
      clip(28.83, 44.17, band(28.9, 38.83, 3, 5), band(28.9, 44.1, 10, 5)),
    ],
  },
  {
    name: "Synth Arp", number: 65, level: 2, color: "brown",
    clips: [
      clip(4, 20.33, area([4.6, 3], [4.8, 7], [5, 8]), comb(5.4, 10, 0.08, 9), area([11, 5], [12, 11], [12.05, 2]), comb(12, 16, 0.08, 12), area([16, 4], [17, 9]), comb(17, 20.3, 0.07, 9), note(5, 10, 7), note(10, 11, 10), note(11, 12, 13), note(12, 16, 10), note(16, 20, 7)),
      clip(23, 28.5, comb(23.4, 28.4, 0.12, 10), note(24, 25, 4), note(25, 26, 6), note(26, 27, 7), note(27, 28, 12)),
      clip(28.83, 38.83, note(29, 31, 6), note(31, 32.5, 8), note(33, 35, 10), note(35, 37, 7), note(37, 38.5, 6)),
    ],
  },
  {
    name: "Underbass", number: 66, level: 2, color: "brown",
    clips: [
      clip(5, 9.17, comb(5.1, 6, 0.08, 9), area([5.5, 8], [6, 11], [7, 5]), area([7.4, 3], [8, 11], [9, 9], [9.05, 2]), note(5.4, 6, 11, 3), note(6, 7, 8, 3), note(7.4, 8, 11, 3), note(8, 9, 8)),
      clip(11, 17, area([11.9, 11], [12.5, 11], [13.8, 8], [14.5, 10], [15.5, 7], [16.1, 9]), note(12, 13.9, 11), note(14, 14.5, 10), note(14.5, 14.9, 6), note(15, 16, 11), note(15.5, 16.1, 9)),
      clip(21, 28, area([21.8, 10], [22, 12], [22.7, 9], [23.6, 11], [24, 7], [26, 8], [28, 9]), note(22, 23, 11), note(23, 24, 8), dots(26.3, 27, 0.16, 7, 3), note(27, 28, 3)),
      clip(28.83, 44.17, area([28.9, 12], [30, 9], [31, 10], [33.9, 11]), comb(34.3, 35, 0.08, 8), area([35, 12], [36, 12], [37, 9]), area([37.8, 11], [38.5, 10]), area([38.9, 10], [40, 5], [41, 13]), area([41.8, 10], [42.5, 7], [44, 10]), note(29, 29.8, 12), note(30, 30.7, 12), note(31, 32.4, 8), dots(32.5, 34, 0.2, 9, 2), note(34, 34.4, 10), line([34.5, 4], [34.95, 9]), note(35, 36, 12), note(36, 36.6, 8), dots(36.7, 38.8, 0.16, 12, 1), note(39, 41, 13), note(42, 43.5, 10), line([43.5, 4], [44.1, 10])),
    ],
  },
  { name: "GROUPS", kind: "closed", level: 0, color: "grey" },
  { name: "--STEMS", kind: "closed", level: 0, color: "grey" },
  { name: "// PRINTS //", kind: "closed", level: 0, color: "grey", muted: true, prints: true },
  { name: "+MASTER BUS+", kind: "closed", level: 0, color: "grey" },
  { name: "输入/输出 通道", kind: "io", level: 0, color: "grey" },
];

const rowHeight = (track) => (track.kind === "ruler" || track.kind === "io" ? "h-5" : "h-[22px]");

/* ---------- icons ---------- */

const ICONS = {
  undo: <><path d="M2.5 2v5.5H8" strokeWidth="2" /><path d="M3 7c3-4 10-3 10.500 1.500C13.500 12 11 13.500 8 13.500" strokeWidth="2" /></>,
  redo: <><path d="M13.5 2v5.5H8" strokeWidth="2" /><path d="M13 7c-3-4-10-3-10.500 1.500C2.500 12 5 13.500 8 13.500" strokeWidth="2" /></>,
  arrow: <path d="M5 1v12l3-3 2 5 2-1-2-5h4z" fill="currentColor" stroke="none" />,
  range: <><path d="M2 2h4M4 2v12M2 14h4" /><path d="M9 4h5v8H9z" fill="currentColor" /></>,
  pencil: <path d="M2 14l1.500-4L11 2l3 2.500L6 12.500z" fill="currentColor" stroke="none" />,
  eraser: <><path d="M2 11l7-8 5 4-6 7H5z" fill="currentColor" stroke="none" /><path d="M5.500 8l4.500 4" stroke="#5c5e61" /></>,
  scissors: <><path d="M3 1.500l6 8M14 5L7 9" strokeWidth="2" /><circle cx="4.500" cy="11" r="2" /><circle cx="10.500" cy="12.500" r="2" /></>,
  glue: <path d="M2 14l2-5 3-5 4-2 4 2-1 4-4 2-1-2-4 2z" fill="currentColor" stroke="none" />,
  mute: <path d="M3 3l10 10M13 3L3 13" strokeWidth="2.400" />,
  zoom: <><circle cx="7" cy="6.500" r="4.500" /><path d="M10.500 10l4 4.500M7 4.500v4M5 6.500h4" strokeWidth="2" /></>,
  hand: <path d="M2 7h1.800L5 9V3h1.600v4L7 1.500h1.700V7l.5-5h1.600v5.500l.6-3.500H13v7l-2 4H6z" fill="currentColor" stroke="none" />,
  comp: <path d="M2 2h3v12H2zM7 3h2v9H7zM11 3h1.500v7H11zM14 4h1v4h-1z" fill="currentColor" stroke="none" />,
  line: <path d="M4 13l8-10" strokeWidth="2" />,
  speaker: <><path d="M1 6h3l4-4v12l-4-4H1z" fill="currentColor" stroke="none" /><path d="M10.500 5.500a3.500 3.500 0 0 1 0 5M12.500 3.500a6 6 0 0 1 0 9" strokeWidth="1.200" /></>,
  paint: <path d="M3 9l6-7 5 5 1 6h-2l-1-3-4 4zM1 9l2 3-1 2-2-2z" fill="currentColor" stroke="none" />,
  palette: <path d="M8 1a6 6 0 0 1 6 6c0 4-2 5-4 5v3H7c1-3-1-3-3-4A6 6 0 0 1 8 1zM5 4.500v2h2v-2zM9 9v2h2V9z" fill="currentColor" fillRule="evenodd" stroke="none" />,
  cross: <path d="M1 3c6 0 8 10 14 10M1 13c2 0 3-1 4-2M15 3c-3 0-4 1-5 3M5 2.500l5 11" />,
  snap: <path d="M8 1v4.500M8 10.500V15M3 2.500l3 3.500M13 2.500L10 6M1.500 8H5M14.500 8H11M3 13.500L6 10M13 13.500L10 10" strokeWidth="2" />,
  grid: <path d="M5 2v12M11 2v12M1 5h14M1 11h14" strokeWidth="1.800" />,
  automation: <><path d="M2 11c2-4 4-6 6-9 1 3 2 4 5 6" /><circle cx="8" cy="3" r="1.500" /><path d="M2 12h9M9 9l4 3-4 3z" fill="currentColor" /></>,
  move: <><path d="M8 1v14" /><path d="M0 6h5v4H0zM10 6h1V4l5 4-5 4v-2h-1z" fill="currentColor" stroke="none" /></>,
  quant: <path d="M2 3l3 4-2 3M9 2L5 14M10 14l4-4M12 8h2" />,
  tuplet: <path d="M3 2v12M3 2l10 5-10 6M7 4v4M10 5v3" />,
  edit: <path d="M4 9.500L12 6C11 2.500 6.500 2 4 5.500s-1.500 8 2.500 8.500c2.500 0 4.500-1.500 5.500-3.500" strokeWidth="2" />,
  align: <path d="M3 2v12M5 4h6v3H5zM5 9h9v3H5z" fill="currentColor" />,
  lower: <><path d="M2 2h12v12H2z" /><path d="M4 11.500h8" strokeWidth="2" /></>,
  right: <><path d="M2 2h12v12H2z" /><path d="M11.500 4v8" strokeWidth="2" /></>,
  plus: <path d="M8 3v10M3 8h10" strokeWidth="2.600" />,
  preset: <path d="M7 2a5.500 5.500 0 0 1 5.500 5H9v6H5.500A5.500 5.500 0 0 1 7 2zM10 8h6v2h-6zM10 11h6v2h-6z" fill="currentColor" stroke="none" />,
  list: <path d="M3 2.500h10v11H3zM3 6h10M3 10h10" />,
  search: <><circle cx="9.500" cy="6" r="4" /><path d="M6.500 9l-4 5" strokeWidth="2" /></>,
  unlock: <><path d="M7 7h8v6H7z" fill="currentColor" stroke="none" /><path d="M2.500 7V4a2 2 0 0 1 4 0M8.500 7V5" /></>,
  power: <><path d="M8 2v6" /><path d="M5 4a5 5 0 1 0 6 0" /></>,
  ramp: <path d="M1.500 3v10M1.500 8h8M10 3v10M12.500 3v10M15 3v10" />,
  noteIcon: <><path d="M10 1.500v10" strokeWidth="1.800" /><ellipse cx="7.500" cy="12" rx="3" ry="2.300" fill="currentColor" stroke="none" /></>,
  tempo: <><path d="M7 2v10M12 3v10" /><ellipse cx="4.500" cy="12" rx="2.600" ry="2" fill="currentColor" stroke="none" /><path d="M9.500 5L12 1l2.500 4zM9.500 11l2.500 4 2.500-4z" fill="currentColor" stroke="none" /></>,
  ruler: <path d="M1 3h14v7h-2V6h-2v4H9V6H7v4H5V6H3v8H1z" fill="currentColor" stroke="none" />,
  signature: <path d="M1 7h14v2.500H1zM6 1.500h4V5H6zM6 11.500h4V15H6z" fill="currentColor" stroke="none" />,
  keys: <path d="M1 1h3v7h1v7H1zM6 8h1V1h2v7h1v7H6zM12 1h3v14h-4V8h1z" fill="currentColor" stroke="none" />,
  openFolder: <path d="M1 13V3h1.500l1-1.500h4L8.500 3H12v2H5.500L2 11zM2 14l4-8h10l-3.500 8z" fill="currentColor" stroke="none" />,
  closedFolder: <path d="M1 4h14v10H1zM1 1.500h6l1 1.500H1z" fill="currentColor" stroke="none" />,
  lock: <><path d="M3 7h10v7H3z" fill="currentColor" stroke="none" /><path d="M5 7V5a3 3 0 0 1 6 0v2" /></>,
  punchIn: <path d="M3 2h10L8 8zM7 10h2v2H7zM7 13h2v2H7z" fill="currentColor" stroke="none" />,
  punchOut: <path d="M7 1h2v2H7zM7 4h2v2H7zM3 14h10L8 8z" fill="currentColor" stroke="none" />,
  leftFlag: <path d="M4 2h9L7 9v5H4z" fill="currentColor" stroke="none" />,
  rightFlag: <path d="M12 2H3l6 7v5h3z" fill="currentColor" stroke="none" />,
  cycle: <path d="M1 12.500h9a4.500 4.500 0 0 0 0-9H6M4 12a5 5 0 0 1 4-4" strokeWidth="1.800" />,
  stop: <path d="M3 3h10v10H3z" strokeWidth="2.400" />,
  play: <path d="M4 2l10 6-10 6z" />,
  record: <circle cx="8" cy="8" r="5.500" />,
  click: <path d="M5 6a2.500 2.500 0 0 1 0 4M8 3a6 6 0 0 1 0 10" strokeWidth="2.500" />,
  clock: <><circle cx="8" cy="8" r="4.500" /><path d="M8 5v3h3M3 2a8 8 0 0 0 0 12M13 2a8 8 0 0 1 0 12" /></>,
  wave: <path d="M1 8h2M4 6v4M6 3v10M8 1v14M10 4v8M12 6v4M14 7v2" strokeWidth="1.500" />,
  midi: <path d="M8 1a7 7 0 1 1-.01 0zM7 2.500v2h2v-2zM3.500 5v2h2V5zM10.500 5v2h2V5zM4 9v2h2V9zM10 9v2h2V9z" fill="currentColor" fillRule="evenodd" stroke="none" />,
  versions: <><path d="M3 4v8M7 3v10" strokeWidth="2" /><path d="M10 5l4-3v10l-4 3z" fill="currentColor" stroke="none" /></>,
  chords: <path d="M2 3h12M2 8h12M2 13h12M8 1v14M6 5.500h4M6 10.500h4" strokeWidth="1.700" />,
  eq: <path d="M1 8h3.500L8 4.500 11.500 8 8 11.500 4.500 8M11.500 8H15" strokeWidth="1.200" />,
  insert: <path d="M1 8.500h14M4.500 5.500h7v6h-7z" strokeWidth="1" />,
  send: <path d="M4.500 2.500h7v6h-7zM8 8.500v5M2 13.500h12" strokeWidth="1.200" />,
  fader: <path d="M4 1.500h8v13H4zM6 8h4" />,
  knob: <><circle cx="8" cy="8" r="6.500" strokeWidth="2" /><path d="M8 8l4 4" strokeWidth="2" /></>,
  arrowIn: <path d="M1 8h6M5 5l3 3-3 3M9 3h5v10H9" />,
  arrowOut: <path d="M7 3H2v10h5M5 8h8M11 5l3 3-3 3" />,
  diamond: <path d="M8 2l4 6-4 6-4-6z" />,
  lanes: <path d="M1 4h14v8H1zM5.500 4v8M10.500 4v8" />,
  star: <path d="M4 1.500h8L16 8l-4 6.500H4L0 8zM8 4v8M4.500 6l7 4M11.500 6l-7 4" fill="#000" stroke="#a9bdd3" />,
  pages: <path d="M2 3h12v10H2zM8 3v10M8 8h6" />,
  route: <path d="M3 3v10h4V7h6M11 4l3 3-3 3" />,
  reload: <path d="M11 2v4H7M10.500 5.500a4.500 4.500 0 1 1-5 0" />,
};

const Icon = ({ name, className = "size-4" }) => (
  <svg viewBox="0 0 16 16" className={`shrink-0 ${className}`} fill="none" stroke="currentColor" strokeWidth="1.5" aria-hidden="true">
    {ICONS[name]}
  </svg>
);

const Gear = ({ className = "size-4", hole = "#5c5e61" }) => (
  <svg viewBox="0 0 16 16" className={`shrink-0 ${className}`} aria-hidden="true">
    <path fill="currentColor" d="M6.500 0.500h3l.5 2 1.500.8 2-.6 1.500 2.600-1.500 1.500v2.400l1.500 1.500-1.500 2.600-2-.6-1.500.8-.5 2h-3l-.5-2-1.500-.8-2 .6L1 10.700l1.500-1.500V6.800L1 5.300l1.500-2.600 2 .6L6 2.500z" />
    <circle cx="8" cy="8" r="2.800" fill={hole} />
  </svg>
);

const Triangle = ({ className = "w-2.5 h-2" }) => (
  <svg viewBox="0 0 10 8" preserveAspectRatio="none" className={`shrink-0 ${className}`} aria-hidden="true">
    <path d="M0 0h10L5 8z" fill="currentColor" />
  </svg>
);

const PlayTriangle = ({ className = "h-2.5 w-2" }) => (
  <svg viewBox="0 0 8 10" preserveAspectRatio="none" className={`shrink-0 ${className}`} aria-hidden="true">
    <path d="M0 0v10l8-5z" fill="currentColor" />
  </svg>
);

/* ---------- toolbar ---------- */

const Group = ({ children, className = "bg-[#5c5e61]" }) => (
  <div className={`flex h-[25px] items-stretch overflow-hidden rounded-[3px] border border-[#7b7d80] ${className}`}>
    {children}
  </div>
);

const ToolButton = ({ icon, label, active = false, className = "w-[25px]" }) => (
  <button
    type="button"
    aria-label={label || icon}
    className={`flex items-center justify-center ${className} ${active ? "bg-[#f4f4f5] text-black" : "text-[#ececec]"}`}
  >
    <Icon name={icon} />
  </button>
);

const DropDown = ({ label, value, className }) => (
  <div className={`relative flex items-center bg-[#1c1d20] text-white ${className}`}>
    <select aria-label={label} className="h-full w-full appearance-none bg-transparent pl-1.5 text-[13px] outline-none">
      <option>{value}</option>
    </select>
    <Triangle className="pointer-events-none absolute right-2 h-2.5 w-2" />
  </div>
);

const STATES = [
  ["M", "bg-[#dccb3a] text-black"],
  ["S", "text-[#eeeeee]"],
  ["L", "text-[#8d8f92]"],
  ["R", "bg-[#4ad94a] text-black"],
  ["W", "text-[#eeeeee]"],
  ["A", "text-[#eeeeee]"],
];

const TOOLS = ["range", "pencil", "eraser", "scissors", "glue", "mute", "zoom", "hand", "comp", "line", "speaker", "paint"];

const Toolbar = () => (
  <header className="flex h-10 shrink-0 items-center justify-between bg-[#262a2d] pr-[6px] pb-px pl-[11px]">
    <Group>
      <ToolButton icon="undo" className="w-6" />
      <ToolButton icon="redo" className="w-6" />
    </Group>

    <div className="flex gap-[5px] pl-3">
      <Group className="w-[150px] bg-[#5c5e61]">
        {STATES.map(([letter, tone]) => (
          <button key={letter} type="button" className={`flex-1 text-[13px] font-bold ${tone}`}>
            {letter}
          </button>
        ))}
      </Group>
      <Group>
        <ToolButton icon="automation" active />
        <DropDown label="Automation mode" value="触控" className="w-[98px]" />
        <ToolButton icon="edit" />
      </Group>
      <Group className="bg-[#1c1d20]">
        <ToolButton icon="move" active />
        <button type="button" aria-label="Auto-scroll options" className="flex w-[23px] items-center justify-center text-white">
          <Triangle className="h-2.5 w-2" />
        </button>
      </Group>
      <Group>
        <span className="flex w-3 flex-col items-center justify-center gap-0.5">
          <i className="size-1 bg-white" />
          <i className="size-1 bg-white" />
        </span>
        <ToolButton icon="arrow" active />
        {TOOLS.map((tool) => (
          <ToolButton key={tool} icon={tool} />
        ))}
      </Group>
      <Group className="bg-[#1c1d20]">
        <ToolButton icon="palette" />
        <button type="button" aria-label="Colors" className="flex w-[18px] items-center justify-center pr-1 text-white">
          <Triangle className="h-2.5 w-2" />
        </button>
      </Group>
      <Group>
        <ToolButton icon="cross" className="w-[23px]" />
      </Group>
      <Group>
        <ToolButton icon="snap" active />
        <DropDown label="Snap type" value="网格" className="w-[112px]" />
      </Group>
      <Group className="bg-[#1c1d20]">
        <span className="flex w-6 items-center justify-center text-white"><Icon name="grid" /></span>
        <DropDown label="Grid type" value="小节" className="-ml-1 w-[116px]" />
      </Group>
      <Group>
        <button type="button" className="w-[25px] text-[16px] text-[#ececec]">Q</button>
        <DropDown label="Quantize preset" value="1/16" className="w-[124px]" />
        <ToolButton icon="quant" />
        <ToolButton icon="tuplet" />
        <ToolButton icon="edit" />
      </Group>
      <Group>
        <ToolButton icon="align" className="w-[23px]" />
      </Group>
    </div>

    <div className="flex gap-[5px]">
      <Group>
        <ToolButton icon="lower" label="Left zone" active />
        <ToolButton icon="lower" />
        <ToolButton icon="right" />
        <button type="button" aria-label="Set up window layout" className="flex w-[25px] items-center justify-center text-white">
          <span className="h-3.5 w-1 border border-r-0 border-white" />
          <Gear className="size-3" />
        </button>
      </Group>
      <Group>
        <button type="button" aria-label="Set up toolbar" className="flex w-[23px] items-center justify-center text-white">
          <Gear className="size-3.5" />
        </button>
      </Group>
    </div>
  </header>
);

/* ---------- inspector ---------- */

const SECTION = "flex h-[23px] items-center overflow-hidden rounded-[3px] border border-[#85878a] bg-[#5c5e61] text-xs text-[#ececec]";

const Section = ({ title, icon }) => (
  <button type="button" className={`${SECTION} w-full text-left`}>
    <PlayTriangle className="ml-1.5 h-2.5 w-2" />
    <span className="ml-1.5 flex-1 whitespace-nowrap">{title}</span>
    <span className="flex h-full w-[23px] items-center justify-center border-l border-[#85878a]">
      <Icon name={icon} />
    </span>
  </button>
);

const HeaderSection = ({ title, icon }) => (
  <div className={SECTION}>
    <button type="button" aria-label="Collapse" className="flex w-6 shrink-0 items-center justify-center">
      <Triangle className="h-2.5 w-2" />
    </button>
    <span className="flex h-full min-w-0 flex-1 items-center bg-[#a999db] pl-1 font-[Roboto,sans-serif] text-[#1e1a2a] whitespace-nowrap">
      <span className="flex-1">{title}</span>
      {icon && <Icon name={icon} className="mr-1.5 size-3 text-white" />}
      <PlayTriangle className="mr-0.5 h-2 w-1" />
    </span>
    <button type="button" aria-label="Edit" className="flex w-[23px] shrink-0 items-center justify-center text-white">
      <Icon name="edit" />
    </button>
  </div>
);

const Settings = () => (
  <button type="button" className="flex w-full items-center justify-end gap-1.5 pr-1 text-xs text-[#b5b7b9]">
    设置
    <Gear className="size-3.5" hole="#25292c" />
  </button>
);

const Fader = ({ text, position, filled, center }) => (
  <div className="flex flex-1 flex-col justify-end">
    <span className={`text-[11px] leading-4 ${center ? "text-center text-[#7690ae]" : "text-right text-white"}`}>{text}</span>
    <div className="relative mx-px h-0.5 bg-[#1f3038]">
      <div className={`h-full bg-[#39b5cf] ${filled ? "w-3/4" : "w-0"}`} />
      <div className={`absolute -top-0.5 h-1.5 w-1.5 -translate-x-1/2 bg-[#d9f4ff] ${position}`} />
    </div>
  </div>
);

const Inspector = () => (
  <aside className="flex w-[173px] shrink-0 flex-col">
    <div className="flex h-6 text-xs text-white" role="tablist">
      <button type="button" role="tab" className="w-[71px] rounded-tl-md rounded-tr-[3px] border-2 border-b-0 border-[#5b5e61] bg-[#25292c] font-bold">观测区</button>
      <div className="flex flex-1 items-center rounded-tr-md border-b-2 border-[#5b5e61]">
        <button type="button" role="tab" className="pl-4">可见通道</button>
        <span className="ml-auto mr-1.5 h-1.5 w-2 border-y-2 border-[#c8c8c8]" />
      </div>
    </div>

    <div className="flex-1 border-x-2 border-[#5b5e61] bg-[#25292c] px-[7px] pt-2">
      <HeaderSection title="S - WOMEN A (D)" />

      <div className="mx-[3px] mt-2">
        <div className="relative h-10 rounded-md bg-[#b3c7dc] text-black">
          <svg viewBox="0 0 60 20" className="absolute left-0 top-[30px] h-5 w-[60px]" aria-hidden="true">
            <path d="M0 0v6c2 12 14 16 26 11L60 8V0z" fill="#b3c7dc" />
          </svg>
          <div className="relative flex gap-1 px-0.5 pt-[3px]">
            <div className="flex h-4 w-11 rounded-sm border border-[#5f7083]">
              <button type="button" className="flex-1 border-r border-[#5f7083] text-[10px] leading-3 font-black">M</button>
              <button type="button" className="flex-1 text-[10px] leading-3 font-black">S</button>
            </div>
            <div className="flex h-4 flex-1 items-center justify-around rounded-sm border border-[#5f7083] text-[10px] font-black">
              <button type="button">R</button>
              <button type="button">W</button>
              <Icon name="pages" className="size-3 text-[#5f7083]" />
              <Icon name="route" className="size-3" />
            </div>
          </div>
          <div className="relative flex items-center gap-1 px-0.5 pt-0.5">
            <div className="flex w-11 items-center gap-0.5">
              <button type="button" aria-label="Record enable" className="-mb-2 flex size-[25px] shrink-0 items-center justify-center rounded-full border border-[#6d3a3f] bg-[#ef5358]">
                <i className="size-2.5 rounded-full bg-black" />
              </button>
              <button type="button" aria-label="Monitor" className="flex size-[17px] shrink-0 items-center justify-center rounded-full border border-[#5f7083] bg-[#c9d6e4]">
                <svg viewBox="0 0 8 12" className="h-2.5 w-2"><path d="M0 4h2l5-4v12L2 8H0z" fill="#000" /></svg>
              </button>
            </div>
            <div className="flex h-4 flex-1 items-center rounded-sm border border-[#5f7083]">
              <button type="button" aria-label="Timebase" className="flex h-full w-[22px] items-center justify-center bg-[#e3a44d]"><Icon name="noteIcon" className="size-3" /></button>
              <span className="flex flex-1 items-center justify-around">
                <Icon name="unlock" className="size-3.5" />
                <Icon name="lanes" className="size-4" />
                <Icon name="star" className="size-3" />
              </span>
            </div>
          </div>
        </div>

        <div className="mt-[10px] flex gap-2">
          <div className="flex w-10 flex-col items-end justify-around py-1 text-[#8ba3bb]">
            <svg viewBox="0 0 15 8" className="h-2 w-[15px]"><path d="M0 8h15V0z" fill="currentColor" /></svg>
            <svg viewBox="0 0 15 8" className="h-2 w-[15px]"><path d="M0 0l6 8 9-8v8H0z" fill="currentColor" /></svg>
            <svg viewBox="0 0 21 10" className="h-2.5 w-[21px]"><path d="M4 1v8L0 5zM17 1v8l4-4z" fill="currentColor" /><circle cx="10.500" cy="5" r="4.500" fill="currentColor" /><path d="M10.500 2v3h3" fill="none" stroke="#25292c" /></svg>
          </div>
          <div className="flex h-[67px] flex-1 flex-col bg-black pb-px">
            <Fader text="0.00" position="left-3/4" filled />
            <Fader text="C" position="left-1/2" center />
            <Fader text="0.00" position="left-1/2" />
          </div>
        </div>

        <div className="mt-[11px] rounded-t-sm bg-black font-[Roboto,'Noto_Sans_CJK_SC',sans-serif] text-[11px] text-white">
          <div className="flex h-[18px] items-center gap-1.5 border-b border-[#3a4046] px-0.5 text-[#6d7b88]">
            <Icon name="diamond" className="size-3 text-[#6d8798]" />
            <span className="flex-1">无轨道预置</span>
            <Icon name="reload" className="size-3" />
          </div>
          <div className="flex h-[18px] items-center gap-1.5 border-b border-[#3a4046] px-0.5">
            <Icon name="arrowIn" className="size-3 text-[#5d7580]" />
            <span>All MIDI Inputs</span>
          </div>
          <div className="flex h-[18px] items-center gap-1.5 px-0.5">
            <Icon name="arrowOut" className="size-3 text-[#5d7580]" />
            <span className="flex-1">!!! Flute 1 Legato !!!</span>
            <Icon name="arrowOut" className="size-3 text-[#8ba3bb]" />
          </div>
        </div>
        <div className="ml-9 flex h-[18px] items-center bg-black pl-4 text-[11px] text-[#b9d7f5] [clip-path:polygon(0_0,100%_0,100%_100%,12px_100%)]">
          <svg viewBox="0 0 9 9" className="size-2"><path d="M0 1h9M0 4.500h9M0 8h9" stroke="#7d8a94" strokeWidth="2" strokeDasharray="2 1.500" /></svg>
          <span className="ml-auto">1</span>
          <Icon name="diamond" className="mx-[11px] size-3 text-[#6d7b88]" />
          <span className="flex h-full items-center gap-1 bg-[#22282b] px-0.5 text-[#aebfca]">
            <PlayTriangle className="h-2 w-1.5" />
            <Icon name="keys" className="size-3" />
          </span>
        </div>

        <div className="mt-[5px] rounded-sm bg-black text-[11px] text-white">
          <div className="flex h-[18px] items-center border-b border-[#3a4046] px-0.5 text-[#6d8798]">
            <Icon name="list" className="size-3" />
            <span className="ml-3 flex-1 text-white">关</span>
            <span className="mr-0.5 flex flex-col gap-1"><Triangle className="h-1 w-1.5 rotate-180" /><Triangle className="h-1 w-1.5" /></span>
            <Icon name="list" className="size-3" />
            <span className="ml-3 flex-1 text-white">关</span>
            <span className="flex flex-col gap-1"><Triangle className="h-1 w-1.5 rotate-180" /><Triangle className="h-1 w-1.5" /></span>
          </div>
          <div className="flex h-[18px] items-center gap-2 px-0.5 text-[#6d7b88]">
            <i className="flex size-3 items-center justify-center rounded-full bg-[#55707c] text-[9px] font-bold text-black not-italic">f</i>
            无鼓映射
          </div>
        </div>
        <div className="mt-1 flex h-[22px] items-center justify-between bg-black px-0.5 font-[Roboto,sans-serif] text-[11px] text-[#6d7b88]">
          Retrospective Recording
          <Triangle className="h-1 w-1.5" />
        </div>
      </div>

      <div className="mt-[10px] flex flex-col gap-[10px]">
        <Section title="Track Versions" icon="versions" />
        <Section title="和弦" icon="chords" />
        <HeaderSection title="play_VST_x64" icon="keys" />
        <Section title="均衡器" icon="eq" />
        <Section title="音频插入" icon="insert" />
        <Section title="音频发送" icon="send" />
        <Section title="音频推子" icon="fader" />
        <Settings />
        <Section title="MIDI 插入" icon="insert" />
        <Section title="快速控制" icon="knob" />
        <Settings />
      </div>
    </div>

    <div className="flex h-[22px] text-xs text-white" role="tablist">
      <button type="button" role="tab" className="w-16 rounded-b-md border-2 border-t-0 border-[#5b5e61] bg-[#25292c] font-bold">轨道</button>
      <div className="flex flex-1 rounded-br-md border-t-2 border-[#5b5e61]">
        <button type="button" role="tab" className="pl-5">编辑器</button>
      </div>
    </div>
  </aside>
);

/* ---------- track list ---------- */

const MuteSolo = ({ muted, selected }) => {
  const tone = selected
    ? "bg-[#f1f1f1] border-[#8a8a8a]"
    : "bg-linear-to-b from-[#626569] to-[#4b4e52] border-[#17191b]";
  return (
    <div className={`flex h-[17px] w-[45px] shrink-0 overflow-hidden rounded-sm border font-['DejaVu_Sans',sans-serif] leading-none font-bold text-black ${tone}`}>
      <button type="button" aria-label="Mute" className={`flex-1 border-r border-[#2a2c2e] text-[11px] ${muted ? "bg-[#e2c54c]" : ""}`}>m</button>
      <button type="button" aria-label="Solo" className="flex-1 text-[10px]">S</button>
    </div>
  );
};

const INDENT = ["w-px", "w-3", "w-[23px]", "w-[34px]"];

const TrackRow = ({ track }) => {
  const { name, number, level, folder, kind, color, muted, selected } = track;
  const icon = kind === "ruler" ? "ruler" : folder ? "openFolder" : number ? "keys" : "closedFolder";
  const plain = kind === "ruler" || kind === "io";

  return (
    <li className={`flex border-b border-[#6f7274] ${rowHeight(track)}`}>
      <span className={`shrink-0 bg-[#0a0b0c] ${INDENT[level]}`} />
      <span className={`flex shrink-0 items-center justify-between pl-0.5 pr-1 ${folder ? "w-[51px]" : "w-10"} ${COLORS[color].block}`}>
        <Icon name={icon} className={folder || kind === "closed" || kind === "io" ? "h-4 w-5 text-white" : "size-4 text-white"} />
        <span className="text-[11px] text-[#2b2b2b]/80">{number}</span>
      </span>
      <span className={`flex flex-1 items-center overflow-hidden ${selected ? "bg-[#e8e8e8] text-black" : "bg-[#25292c] text-white"}`}>
        {plain ? (
          <span className="pl-2.5 text-[11px]">{name}</span>
        ) : (
          <>
            <span className="pl-1.5"><MuteSolo muted={muted} selected={selected} /></span>
            <span className={`font-['Liberation_Sans',sans-serif] text-[13px] whitespace-nowrap ${folder || kind ? "pl-1.5" : "pl-1"}`}>{name}</span>
          </>
        )}
      </span>
      <span className="w-3 shrink-0 bg-black" />
    </li>
  );
};

const SMALL_BUTTON = "flex h-[17px] shrink-0 items-center justify-center rounded-sm border border-[#17191b] bg-[#505356] text-black";

const TrackList = () => (
  <section className="flex w-[359px] shrink-0 flex-col border-r border-[#5b5e61] bg-[#25292c] text-white">
    <div className="flex h-[25px] items-start justify-between border-b border-[#6f7274] pr-1">
      <div className="flex h-5 rounded-[3px] border border-[#7b7d80] bg-[#5c5e61]">
        <ToolButton icon="plus" label="Add track" className="w-6" />
        <ToolButton icon="preset" label="Track presets" className="w-6" />
      </div>
      <div className="flex gap-[7px]">
        <span className="pt-0.5 font-[Roboto,sans-serif] text-[11px] text-[#8d9093]">155 / 222</span>
        <div className="flex h-5 rounded-[3px] border border-[#7b7d80] bg-[#5c5e61]">
          <ToolButton icon="list" label="Visibility" className="w-6" />
          <ToolButton icon="search" label="Find tracks" className="w-6" />
        </div>
      </div>
    </div>

    <div className="flex h-5 border-b border-[#6f7274]">
      <span className="ml-px flex w-10 items-center bg-[#929395] pl-0.5"><Icon name="ruler" /></span>
      <span className="flex flex-1 items-center pl-2.5 text-[11px]">秒</span>
      <span className="w-3 bg-black" />
    </div>
    <div className="flex h-[42px] border-b border-[#6f7274]">
      <span className="ml-px w-10 bg-[#929395] pt-0.5 pl-0.5"><Icon name="signature" /></span>
      <span className="flex flex-1 items-start pt-[3px] pl-1.5 text-[13px]">
        <button type="button" aria-label="Lock" className={`w-[23px] ${SMALL_BUTTON}`}><Icon name="unlock" className="size-3.5" /></button>
        <span className="w-[98px] pl-[26px] leading-[17px]">拍号</span>
        <button type="button" aria-label="Signature menu" className={`ml-[53px] w-[23px] ${SMALL_BUTTON}`}><Triangle className="h-1.5 w-2.5" /></button>
      </span>
      <span className="w-3 bg-black" />
    </div>
    <div className="flex h-[39px] border-b border-[#6f7274]">
      <span className="ml-px w-10 shrink-0 bg-[#929395] pt-0.5 pl-0.5"><Icon name="noteIcon" /></span>
      <span className="flex min-w-0 flex-1 items-start overflow-hidden pt-[3px] pl-1.5 text-[13px]">
        <button type="button" aria-label="Activate tempo track" className="flex h-[17px] w-[23px] shrink-0 items-center justify-center rounded-l-sm border border-[#17191b] bg-[#e58a54] text-black"><Icon name="power" className="size-3" /></button>
        <button type="button" aria-label="Lock" className={`w-[22px] ${SMALL_BUTTON}`}><Icon name="unlock" className="size-3.5" /></button>
        <span className="w-[76px] shrink-0 pl-1 leading-[17px]">速度</span>
        <input aria-label="Tempo" defaultValue="168.348" className="ml-[53px] h-[17px] w-[52px] shrink-0 rounded-sm border border-[#17191b] bg-[#505356] pr-1 text-right text-[11px] text-black" />
        <button type="button" aria-label="Tempo ramp" className={`ml-[3px] w-[23px] ${SMALL_BUTTON}`}><Icon name="ramp" className="size-3.5" /></button>
        <button type="button" className={`ml-[3px] w-[82px] text-[11px] whitespace-nowrap ${SMALL_BUTTON}`}>渐变</button>
      </span>
      <span className="w-3 shrink-0 bg-black" />
    </div>
    <div className="h-[9px] border-b border-[#6f7274]" />

    <ul className="flex flex-col">
      <li className="flex h-1 border-b border-[#6f7274]">
        <span className="w-[23px] bg-[#0a0b0c]" />
        <span className="w-10 bg-[#7f1f20]" />
        <span className="flex-1" />
        <span className="w-3 bg-black" />
      </li>
      {TRACKS.map((track, i) => (
        <TrackRow key={i} track={track} />
      ))}
    </ul>

    <div className="mt-auto flex h-[26px] items-center gap-3 px-1.5 text-xs text-[#85888b]">
      <span className="flex-1 pl-0.5 text-[#cfcfcf]">-</span>
      <Triangle className="h-1.5 w-2.5" />
      <Gear className="size-3" hole="#25292c" />
    </div>
  </section>
);

/* ---------- timeline ---------- */

const Shape = ({ shape, x, colors }) => {
  const { type, a, b } = shape;
  if (type === "note" || type === "band") {
    return <rect x={x(a)} y={shape.y} width={Math.max(2, x(b) - x(a))} height={shape.h} fill={shape.tone || colors[type]} />;
  }
  if (type === "area") {
    const first = shape.points[0];
    const last = shape.points[shape.points.length - 1];
    const top = shape.points.map(([bar, h]) => `${x(bar)},${17 - h}`).join(" ");
    return <polygon points={`${x(first[0])},17 ${top} ${x(last[0])},17`} fill={colors.area} />;
  }
  if (type === "line") {
    const points = shape.points.map(([bar, y]) => `${x(bar)},${y}`).join(" ");
    return <polyline points={points} fill="none" stroke={colors.note} strokeWidth="2" strokeDasharray="4 1" />;
  }

  const steps = Array.from({ length: Math.floor((b - a) / shape.step + 0.01) + 1 }, (_, i) => i);
  if (type === "comb") {
    return steps.map((i) => {
      const h = shape.h - ((i * 7) % 4);
      return <rect key={i} x={x(a + i * shape.step)} y={17 - h} width="1" height={h} fill={colors.area} />;
    });
  }
  return steps.map((i) => {
    const swing = (Math.sin(i * 0.35) + Math.sin(i * 2.6)) * 0.6 * shape.amp;
    return <rect key={i} x={x(a + i * shape.step)} y={shape.y + Math.round(swing)} width="2" height="2" fill={colors.note} />;
  });
};

const Clip = ({ clip: { start, end, shapes }, color }) => {
  const colors = COLORS[color];
  const left = barX(start);
  const width = barX(end) - left + 1;
  const x = (bar) => barX(bar) - left;
  const bars = BARS.filter((bar) => bar > start && bar < end);

  return (
    <svg className="absolute top-px" style={{ left }} width={width} height="19" shapeRendering="crispEdges">
      <rect width={width} height="19" fill={colors.dark} />
      <rect x="1" y="1" width={width - 2} height="17" fill={colors.light} />
      <rect x="2" y="2" width={Math.max(0, width - 4)} height="15" fill={colors.fill} />
      {bars.map((bar) => (
        <rect key={bar} x={x(bar)} y="2" width="1" height="15" fill={colors.area} />
      ))}
      {shapes.map((shape, i) => (
        <Shape key={i} shape={shape} x={x} colors={colors} />
      ))}
    </svg>
  );
};

const PrintsClip = () => (
  <div
    className="absolute top-px flex h-[19px] flex-col border border-[#d5d5d5] bg-[#8a7f7c]"
    style={{ left: barX(LEFT_LOCATOR), width: barX(RIGHT_LOCATOR) - barX(LEFT_LOCATOR) }}
  >
    <i className="h-[3px] bg-[#8e979e]" />
    <i className="h-0.5 bg-[#e2d668]" />
    <i className="h-0.5 bg-[#ea7070]" />
    <i className="h-px bg-[#d65da0]" />
    <i className="h-0.5 bg-[#b1d86b]" />
    <i className="h-0.5 bg-[#6a5bc2]" />
    <i className="h-px bg-[#66c166]" />
  </div>
);

const BarRuler = () => (
  <div className="relative h-full overflow-hidden bg-[#aabbcd] text-[13px] font-bold text-black">
    {BARS.map((bar) => (
      <span key={bar} className="absolute inset-y-0 border-l border-black pl-[3px] leading-5" style={{ left: barX(bar) }}>
        {bar}
      </span>
    ))}
  </div>
);

const Lane = ({ track }) => (
  <li className={`relative ${rowHeight(track)} ${track.kind === "ruler" ? "" : "border-b border-[#40474c]"}`}>
    {track.kind === "ruler" && <BarRuler />}
    {track.clips && <Clip clip={clip(0, 0.31)} color={track.color} />}
    {track.clips?.map((item) => (
      <Clip key={item.start} clip={item} color={item.color || track.color} />
    ))}
    {track.prints && <PrintsClip />}
  </li>
);

const GridLines = () => (
  <div className="absolute inset-0 bg-[#25292c]">
    <div
      className="absolute inset-y-0 bg-[#29303a]"
      style={{ left: barX(LEFT_LOCATOR), width: barX(RIGHT_LOCATOR) - barX(LEFT_LOCATOR) }}
    />
    {BARS.slice(1).map((bar) => (
      <i key={bar} className="absolute inset-y-0 w-px bg-[#6d7475]" style={{ left: barX(bar) }} />
    ))}
    <i className="absolute inset-y-0 right-0 w-px bg-[#6d7475]" />
  </div>
);

const TimeRuler = () => (
  <div className="relative h-5 overflow-hidden border-b border-[#6f7880] bg-[#aabbcd] text-[11px] text-black">
    {SECONDS.map(([x, label], i) => {
      const next = SECONDS[i + 1] ? SECONDS[i + 1][0] : x + 97;
      return (
        <Fragment key={label}>
          <i className={`absolute top-0 w-px bg-black ${i % 2 ? "h-[7px]" : "h-[18px]"}`} style={{ left: ORIGIN + x }} />
          {[1, 2, 3, 4].map((n) => (
            <i key={n} className="absolute top-0 h-1.5 w-px bg-[#7d8b99]" style={{ left: ORIGIN + x + Math.round(((next - x) * n) / 5) }} />
          ))}
          <span className="absolute top-[3px] pl-1 leading-4" style={{ left: ORIGIN + x }}>{label}</span>
        </Fragment>
      );
    })}
  </div>
);

const MainRuler = () => (
  <div className="relative h-[25px] overflow-hidden bg-[#1c1d20] text-[13px] font-bold text-black">
    <div
      className="absolute inset-y-0 bg-[#8c8e92]"
      style={{ left: barX(LEFT_LOCATOR), width: barX(RIGHT_LOCATOR) - barX(LEFT_LOCATOR) }}
    />
    <svg className="absolute top-0 size-[9px]" style={{ left: barX(LEFT_LOCATOR) }}><path d="M0 0h9L0 9z" fill="#fff" /></svg>
    <svg className="absolute top-0 size-[9px]" style={{ left: barX(RIGHT_LOCATOR) - 9 }}><path d="M0 0h9v9z" fill="#fff" /></svg>
    {BARS.map((bar) => (
      <span
        key={bar}
        className={`absolute inset-y-0 flex items-end border-l pl-1 leading-[17px] ${bar ? "border-black" : "border-transparent text-white"}`}
        style={{ left: barX(bar) }}
      >
        {bar}
      </span>
    ))}
  </div>
);

const TempoLane = () => (
  <div className="relative h-[39px] border-b border-[#6d7475]">
    <svg className="absolute inset-0 h-full w-full">
      <polyline
        points={[...TEMPO_POINTS, [1975, 22]].map(([x, y]) => `${ORIGIN + x},${y}`).join(" ")}
        fill="none"
        stroke="#717375"
        strokeWidth="2"
      />
      {TEMPO_POINTS.slice(1).map(([x, y]) => (
        <rect key={x} x={ORIGIN + x - 1} y={y - 1} width="3" height="3" fill="#fff" stroke="#5b5e61" strokeWidth="1" />
      ))}
    </svg>
  </div>
);

const PARTIAL_CLIPS = [[0, 0.31], [12, 16], [28.83, 31], [34.67, 38], [38.67, 41]];

const Timeline = () => (
  <section className="flex min-w-0 flex-1 flex-col">
    <div className="relative flex flex-1 flex-col overflow-hidden">
      <MainRuler />
      <TimeRuler />
      <div className="relative shrink-0">
        <GridLines />
        <div className="relative h-[42px] border-b border-[#40474c]">
          <svg className="absolute top-px left-[7px] h-5 w-[47px]" aria-hidden="true">
            <path d="M0 .5h46L28 19H0z" fill="#8d8f92" stroke="#d5d7d9" />
          </svg>
          <span className="absolute top-px left-[11px] text-[11px] leading-[18px] text-black">6/4 <sup className="text-[8px]">+</sup></span>
        </div>
        <TempoLane />
      </div>
      <div className="h-[9px] shrink-0 border-b border-[#6d7475] bg-[#25292c]" />
      <div className="relative flex-1 overflow-hidden">
        <GridLines />
        <ul className="relative flex flex-col">
          <li className="relative h-1 overflow-hidden border-b border-[#40474c]">
            {PARTIAL_CLIPS.map(([a, b]) => (
              <i
                key={a}
                className="absolute top-0 h-0.5 border-b border-[#490a0c] bg-[#b24141]"
                style={{ left: barX(a), width: barX(b) - barX(a) }}
              />
            ))}
          </li>
          {TRACKS.map((track, i) => (
            <Lane key={i} track={track} />
          ))}
        </ul>
        <i className="absolute inset-y-0 left-[5px] w-0.5 border-l border-white bg-black" />
      </div>
      <i className="absolute inset-y-0 left-[846px] w-[3px] border-x border-white bg-black" />
    </div>

    <div className="flex h-4 items-center pb-1 pl-4 text-[#b5b5b5]">
      <div className="h-[5px] flex-1 rounded-full border-y-2 border-[#a3a3a3] bg-[#d9d9d9]" />
      <div className="h-px w-[141px] bg-[#b5b5b5]" />
      <Triangle className="ml-[21px] h-1 w-2" />
      <span className="ml-2 h-px w-[5px] bg-current" />
      <div className="relative ml-1.5 h-px w-[45px] bg-current">
        <i className="absolute -top-[3px] left-0.5 size-[7px] rounded-full bg-current" />
      </div>
      <span className="mr-3 ml-2 text-xs leading-none">+</span>
    </div>
  </section>
);

const VerticalScroll = () => (
  <div className="flex w-[14px] shrink-0 flex-col items-center pr-1 text-[#b5b5b5]">
    <button type="button" aria-label="Ruler menu" className="mt-1.5 ml-1 flex h-[13px] w-3 items-center justify-center rounded-[1px] bg-[#77797c] text-black">
      <Triangle className="h-1.5 w-2" />
    </button>
    <div className="mt-[22px] h-[35px] w-[5px] rounded-full bg-[#b5b5b5]" />
    <div className="h-[34px] w-px bg-[#b5b5b5]" />
    <svg className="mt-[28px] h-2 w-2" viewBox="0 0 8 8"><path d="M1 7l6-6" stroke="currentColor" strokeWidth="1.500" /></svg>
    <div className="mt-1 h-[50px] w-px bg-[#77797c]" />
    <i className="size-1.5 rounded-full bg-current" />
    <div className="h-[355px] w-px bg-[#77797c]" />
    <div className="w-[5px] flex-1 rounded-full border-x-2 border-[#a3a3a3] bg-[#d9d9d9]" />
    <Triangle className="mt-[22px] h-1 w-2" />
    <span className="mt-[9px] h-px w-[5px] bg-current" />
    <div className="relative mt-1.5 h-14 w-px bg-current">
      <i className="absolute top-1 -left-[3px] size-[7px] rounded-full bg-current" />
    </div>
    <span className="mt-0.5 mb-[18px] text-xs leading-none">+</span>
  </div>
);

/* ---------- transport ---------- */

const Grip = () => (
  <span className="flex w-[5px] shrink-0 flex-col items-center gap-[3px]">
    {[0, 1, 2, 3].map((n) => (
      <i key={n} className="h-px w-[3px] bg-[#b5b5b5]" />
    ))}
  </span>
);

const TimeField = ({ icon, label, value }) => (
  <Group className="w-[151px] bg-[#1c1d20]">
    <span className="flex w-[25px] shrink-0 items-center justify-center bg-[#5c5e61] text-white"><Icon name={icon} className="size-3.5" /></span>
    <input aria-label={label} defaultValue={value} className="min-w-0 flex-1 bg-transparent pr-1.5 text-right text-[15px] text-white outline-none" />
  </Group>
);

const MenuPair = ({ icon }) => (
  <Group className="w-11 bg-[#1c1d20]">
    <button type="button" aria-label={icon} className="flex flex-1 items-center justify-center gap-2 text-white">
      {icon === "dot" ? <i className="size-[11px] rounded-full bg-white" /> : <Icon name={icon} className="size-[15px]" />}
      <Triangle className="h-2 w-2" />
    </button>
  </Group>
);

const Transport = () => (
  <footer className="flex h-10 shrink-0 items-center justify-between bg-[#262a2d] px-[6px]">
    <div className="flex items-center gap-[3px]">
      <Group>
        <ToolButton icon="clock" className="w-[23px]" />
      </Group>
      <span className="w-0" />
      <MenuPair icon="dot" />
      <Grip />
      <MenuPair icon="wave" />
      <Grip />
      <MenuPair icon="midi" />
      <Grip />
      <Group>
        <button type="button" className="w-9 text-[13px] text-[#ececec]">AQ</button>
      </Group>
    </div>

    <div className="flex items-center gap-[5px] pl-3">
      <TimeField icon="leftFlag" label="Left locator" value="0.   6.  1.     0" />
      <TimeField icon="rightFlag" label="Right locator" value="46.   5.  1.     0" />
      <div className="flex items-center gap-0.5">
        <Group>
          <ToolButton icon="lock" label="Lock punch" />
          <ToolButton icon="punchIn" label="Punch in" />
          <ToolButton icon="punchOut" label="Punch out" className="w-6" />
        </Group>
        <Grip />
      </div>
      <div className="flex items-center gap-0.5">
        <div className="flex h-8 overflow-hidden rounded-[3px] border-2 border-[#b0b2b4] bg-[#43464a]">
          <ToolButton icon="cycle" className="w-[49px]" />
          <button type="button" aria-label="Stop" className="flex w-[50px] items-center justify-center bg-[#e3eaf2] text-black"><Icon name="stop" className="size-[15px]" /></button>
          <ToolButton icon="play" className="w-[50px]" />
          <ToolButton icon="record" className="w-[49px]" />
        </div>
        <Grip />
      </div>
      <Group>
        <button type="button" aria-label="Metronome" className="flex w-9 items-center justify-center text-[#8d8f92]"><Icon name="click" /></button>
      </Group>
      <div className="flex items-center gap-0.5">
        <TimeField icon="noteIcon" label="Primary time" value="0.   1.  1.     0" />
        <Grip />
      </div>
      <div className="flex items-center gap-0.5">
        <Group className="bg-[#1c1d20]">
          <ToolButton icon="tempo" label="Tempo track" active />
          <input aria-label="Project tempo" defaultValue="168.348" className="w-[60px] bg-transparent text-right text-xs text-white outline-none" />
          <span className="flex w-[22px] flex-col items-center justify-center gap-0.5 text-white">
            <Triangle className="h-[7px] w-2 rotate-180" />
            <Triangle className="h-[7px] w-2" />
          </span>
        </Group>
        <Grip />
      </div>
    </div>

    <div className="flex items-center gap-[13px]">
      <Group>
        <ToolButton icon="route" />
        <ToolButton icon="edit" />
      </Group>
      <span className="h-7 w-[75px] rounded-[3px] bg-black pl-5"><i className="block h-full w-px bg-[#5c5e61]" /></span>
      <Group>
        <button type="button" aria-label="Set up transport" className="flex w-[23px] items-center justify-center text-white"><Gear className="size-3.5" /></button>
      </Group>
    </div>
  </footer>
);

/* ---------- desktop widgets floating above the window ---------- */

const UploadWidget = () => (
  <button type="button" className="absolute top-[5px] right-[107px] flex h-[25px] w-[104px] overflow-hidden rounded-[3px] border border-[#1d8ff0] bg-[#dcf3ff] text-[13px] text-[#3aa5f5]">
    <span className="flex h-full w-[24px] items-center justify-center bg-[#2196f8]">
      <svg viewBox="0 0 20 16" className="h-4 w-5" fill="none" stroke="#fff" strokeWidth="2.400">
        <circle cx="10" cy="4.500" r="3.200" />
        <circle cx="5" cy="11" r="3.600" />
        <circle cx="15" cy="11" r="3.600" />
      </svg>
    </span>
    <span className="flex h-full flex-1 items-center justify-center text-xs">拖拽上传</span>
  </button>
);

const SystemWidget = () => (
  <div className="absolute right-[225px] bottom-[10px] flex h-[38px] w-[62px] flex-col justify-center rounded-r-lg bg-[#232529] pl-2 text-[11px] leading-4 text-[#a8a8a8]">
    <span className="flex items-center gap-1.5 pl-1 text-xs text-[#55d95f]">
      42℃
      <svg viewBox="0 0 10 14" className="h-3 w-2.5 shrink-0"><path d="M6 0c5 5 5 10-1 14C-1 11-1 6 6 0z" fill="#3fd32f" /></svg>
    </span>
    <span className="whitespace-nowrap">CPU温度</span>
    <div className="absolute right-[60px] bottom-[-7px] flex size-[54px] items-center justify-center rounded-full border-2 border-[#1ba1e6] bg-[#303138] text-[21px] text-white outline-2 outline-[#2a2d33]">
      17<span className="pt-1.5 text-xs">%</span>
    </div>
  </div>
);

const NetWidget = () => (
  <div className="absolute right-[342px] bottom-[43px] flex h-[41px] w-[84px] flex-col justify-around rounded-[3px] bg-[#0b0c0e]/85 pl-2 text-xs whitespace-nowrap">
    <span className="text-[#f5a524]">↑ 0.9 KB/s</span>
    <span className="text-[#7fe524]">↓ 11.9 KB/s</span>
  </div>
);

const InputMethodBar = () => (
  <div className="absolute right-[2px] bottom-0 flex h-[22px] w-[182px] items-center justify-between bg-white pr-1.5 pl-2.5 text-[#1f74cf]">
    <svg viewBox="0 0 28 26" className="absolute bottom-0 -left-[24px] h-[26px] w-7" aria-hidden="true">
      <path d="M0 4L22 0q2 0 3 3l3 16q0 3-2 4l-20 3q-3 0-4-3z" fill="#f2561d" />
      <path d="M21 7c-5-2-13-1-13 3 0 3 12 2 12 6 0 3-8 4-13 2" fill="none" stroke="#fff" strokeWidth="3.500" />
    </svg>
    <span className="text-sm font-bold">中</span>
    <span className="text-sm font-bold">°,</span>
    <svg viewBox="0 0 16 16" className="size-4" fill="none" stroke="currentColor" strokeWidth="1.800"><circle cx="8" cy="8" r="7" /><path d="M4.500 9a3.500 3.500 0 0 0 7 0M5.500 5v2M10.500 5v2" /></svg>
    <svg viewBox="0 0 16 16" className="size-4"><rect x="5.500" width="5" height="10" rx="2.500" fill="currentColor" /><path d="M3 7a5 5 0 0 0 10 0M8 12v3M5 15h6" fill="none" stroke="currentColor" strokeWidth="1.600" /></svg>
    <svg viewBox="0 0 16 12" className="h-3 w-4"><path d="M0 0h16v12H0z" fill="currentColor" /><path d="M2 3h12M2 6h12M4 9.500h8" stroke="#fff" strokeWidth="1.400" strokeDasharray="1.500 1" /></svg>
    <svg viewBox="0 0 16 16" className="size-3.5 text-[#b5c2d8]"><circle cx="6" cy="4" r="4" fill="currentColor" /><path d="M0 15c0-8 12-8 12 0z" fill="currentColor" /><path d="M10 9h5l-3 6" fill="none" stroke="currentColor" strokeWidth="2" /></svg>
    <svg viewBox="0 0 16 16" className="size-4"><path d="M5 1q3 3 6 0l5 3-2 4-2-1v9H4V7L2 8 0 4z" fill="currentColor" /></svg>
    <svg viewBox="0 0 16 16" className="size-3.5"><path d="M0 0h7v7H0zM0 9h7v7H0zM9 9h7v7H9z" fill="currentColor" /><path d="M10 1h5v5h-5z" fill="none" stroke="currentColor" strokeWidth="2" /></svg>
  </div>
);

export default function App() {
  return (
    <div className="relative flex min-h-screen flex-col overflow-hidden bg-[#08090a] font-['Open_Sans','Noto_Sans_CJK_SC',sans-serif]">
      <Toolbar />
      <div className="flex h-10 shrink-0 items-center justify-center bg-[#191b1d] text-[11px] text-[#a9abad]">无选择对象</div>

      <main className="flex flex-1 gap-1 p-1">
        <Inspector />
        <div className="flex min-w-0 flex-1 rounded-md border-2 border-[#f1f1f1] bg-[#25292c] pt-1 pl-1">
          <TrackList />
          <div className="w-[7px] shrink-0" />
          <Timeline />
          <VerticalScroll />
          <div className="w-1 shrink-0" />
        </div>
      </main>

      <Transport />
      <UploadWidget />
      <NetWidget />
      <SystemWidget />
      <InputMethodBar />
    </div>
  );
}
